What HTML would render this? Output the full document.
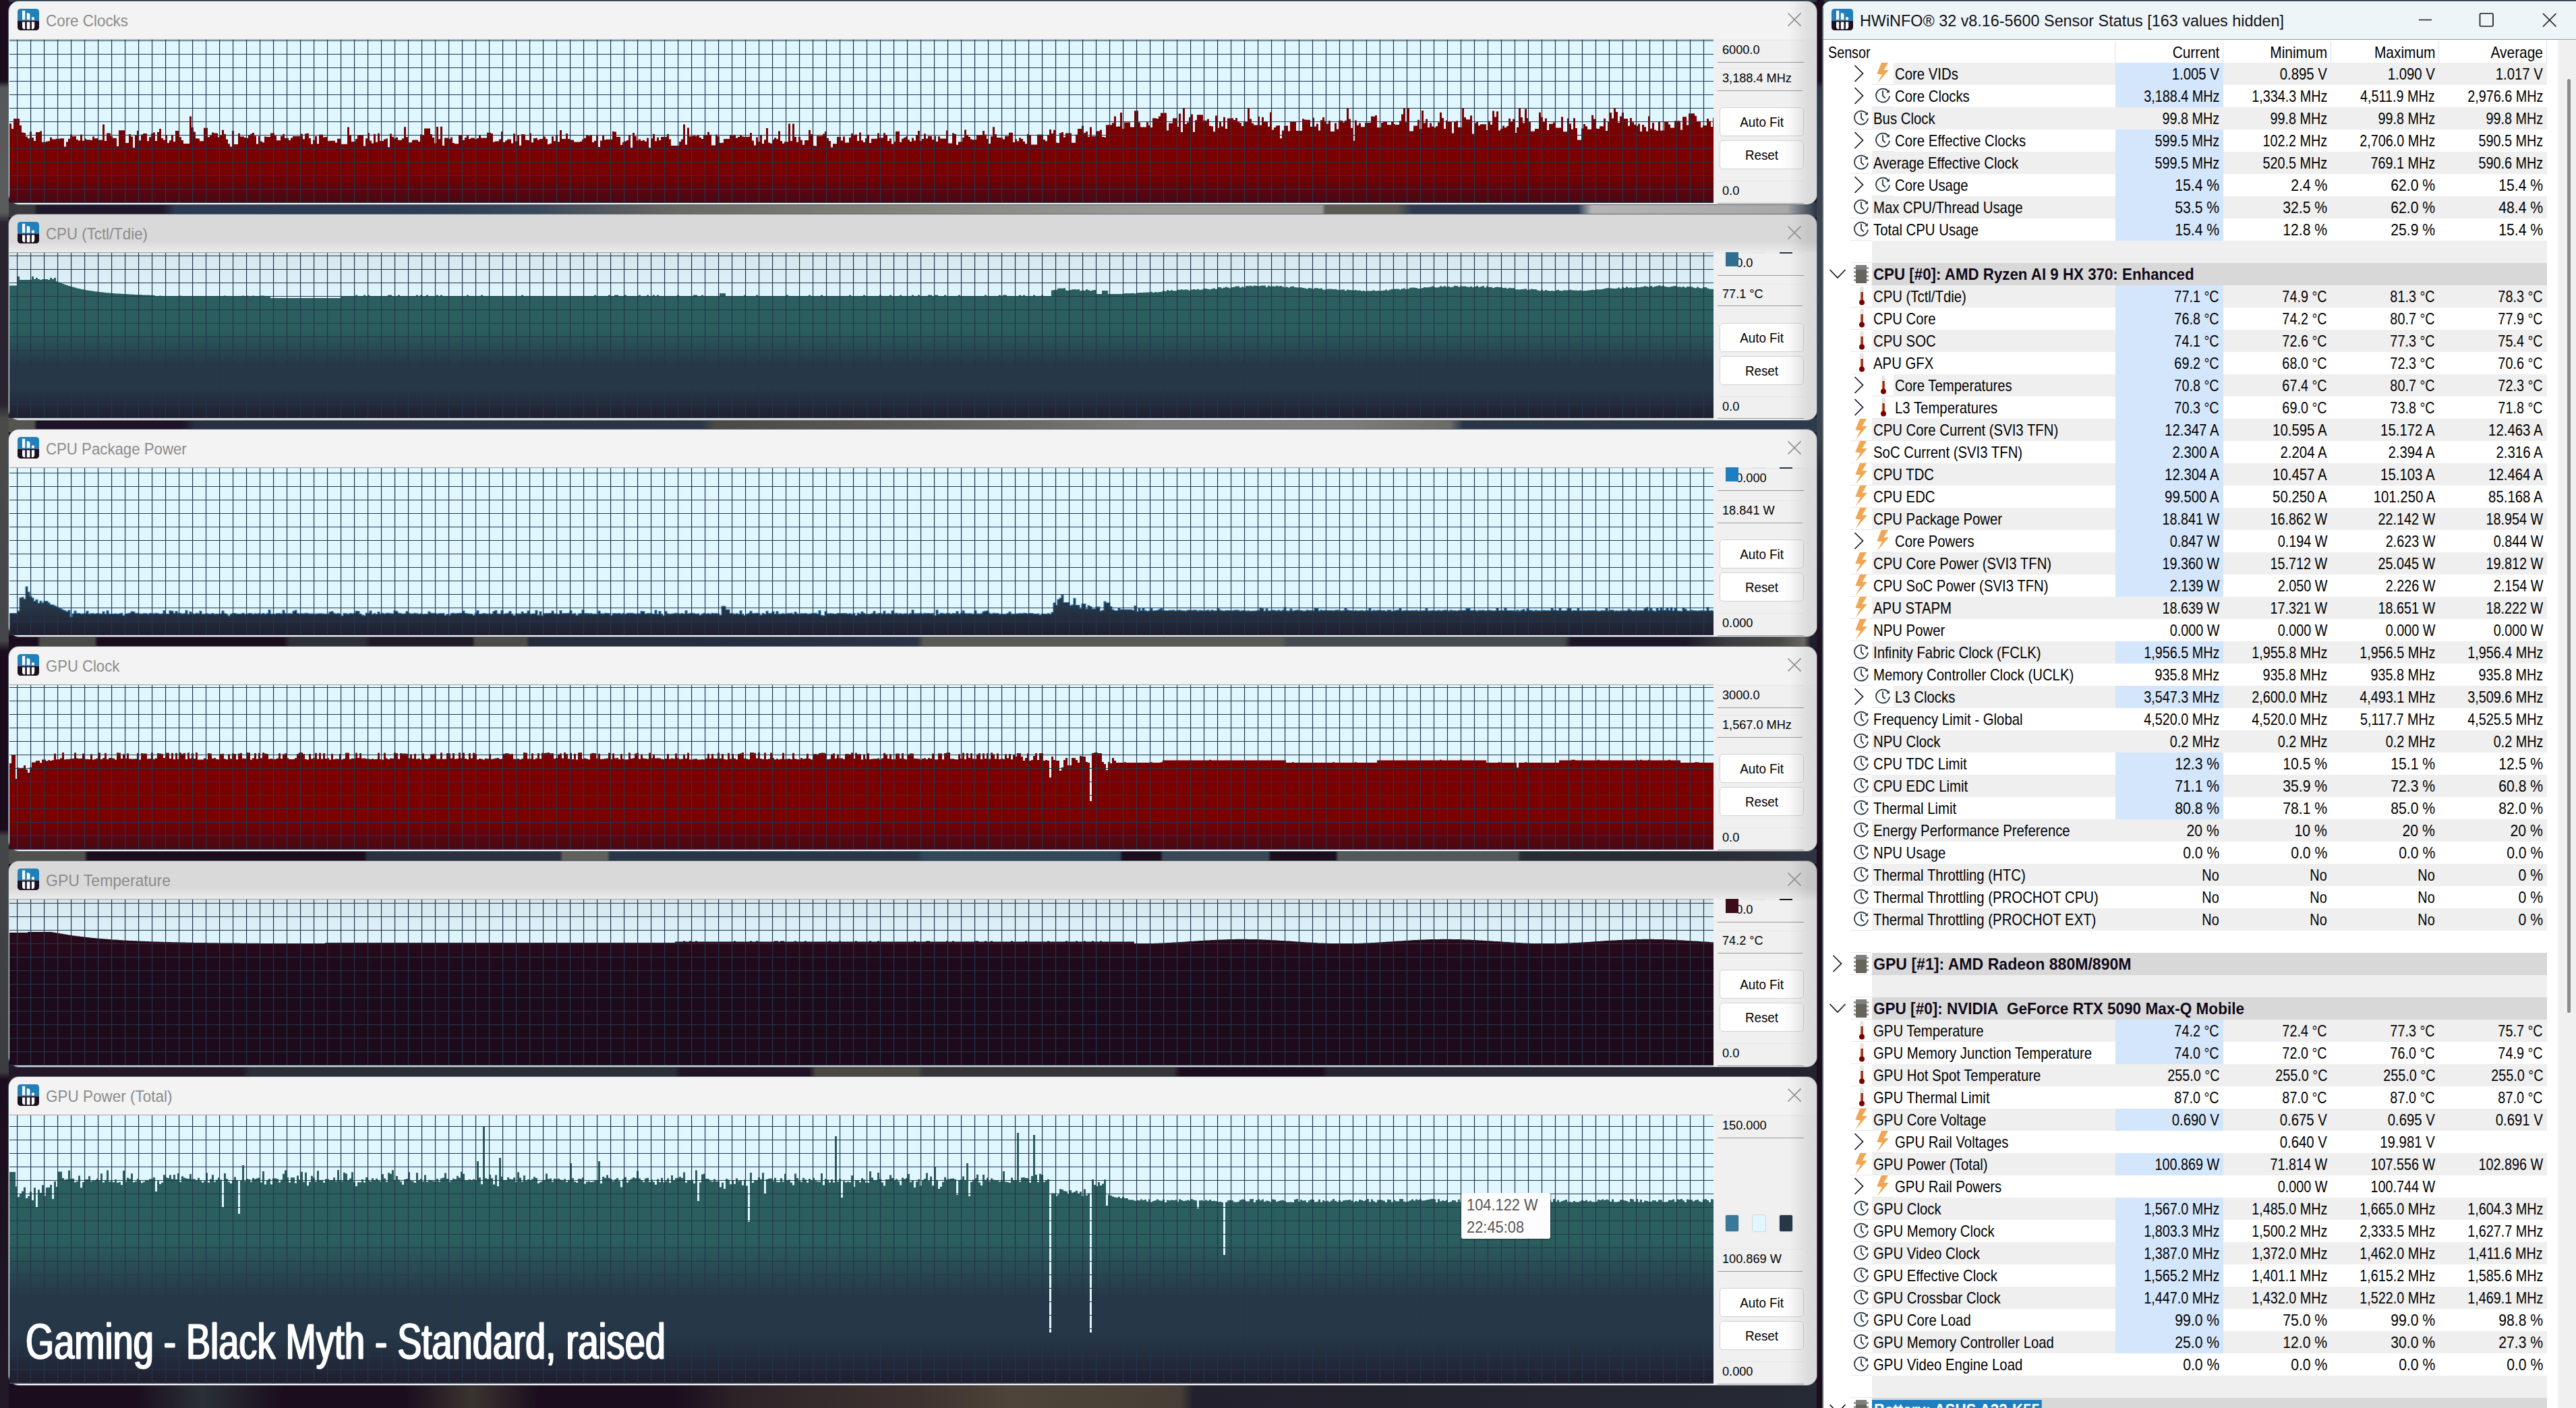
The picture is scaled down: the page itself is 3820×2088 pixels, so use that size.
<!DOCTYPE html><html><head><meta charset="utf-8"><title>HWiNFO</title><style>
*{box-sizing:border-box;margin:0;padding:0}
html,body{width:3820px;height:2088px;background:#1b0d1e}
#root{width:3820px;height:2088px;overflow:hidden;background:#1b0d1e;font-family:"Liberation Sans",sans-serif;position:relative}
.gap{position:absolute;left:0;width:2703px}
.win{position:absolute;left:13px;width:2681px;border-radius:15px;overflow:hidden;box-shadow:0 0 0 1px #5a6570}
.win .ic{position:absolute}
.wt{position:absolute;left:55px;top:0;height:56px;line-height:57px;font-size:24.5px;color:#8b8b8b;white-space:pre;transform-origin:0 0;transform:scaleX(.93)}
.cx{position:absolute;left:2637px;top:16px}
.rg{position:absolute;left:2640px;right:0;top:0;bottom:0;background:linear-gradient(90deg,rgba(0,0,0,0),rgba(0,0,0,.085) 70%,rgba(0,0,0,.09))}
.rp{position:absolute;left:2528px;right:0;background:#f0f0f0}
.tg{position:absolute;left:0;right:0;height:16px;background:linear-gradient(#d9d9d9,#ebebeb)}
.fld{position:absolute;left:2534px;width:128px;height:33.5px;background:#f0f0f0;border-bottom:1.5px solid #9a9a9a;border-top:1px solid #e6e6e6;font-size:19px;line-height:28.5px;padding-left:6.500px;color:#000;white-space:pre;overflow:hidden}
.fld span{display:inline-block;transform-origin:0 0;transform:scaleX(.955)}
.fld i{visibility:hidden;font-style:normal}
.btn{position:absolute;left:2537px;width:125px;height:43px;background:linear-gradient(90deg,#fff 70%,#f3f3f3);border:1px solid #d2d2d2;border-radius:5px;font-size:19.5px;line-height:42.5px;text-align:center;color:#000}
.btn span{display:inline-block;transform:scaleX(.965)}
.sw{position:absolute;width:21px;height:26px;border:1px solid #d8d8d8;border-radius:3px}
svg.g{position:absolute;display:block}
.sw0{position:absolute;top:2px;width:1120px;height:2090px;background:#fff;border-radius:12px 0 0 0;overflow:hidden;box-shadow:0 0 0 1px #5a6570}
.swb{position:absolute;left:0;top:0;width:1.3px;height:100%;background:#6a6658}
.stb{position:absolute;left:0;top:0;width:100%;height:57px;background:#eef5f9;border-bottom:1px solid #9a9a9a}
.sw0 .ic{position:absolute}
.stt{position:absolute;left:55px;top:0;height:56px;line-height:57px;font-size:24.5px;color:#111;white-space:pre;transform-origin:0 0}
.wc{position:absolute;left:878px;top:13px}
.hdr{position:absolute;left:0;top:57px;width:100%;height:34px;font-size:23.2px;line-height:33px}
.hdr .t,.hdr .v{top:3px}
.cs{position:absolute;top:2px;width:1px;height:32px;background:#d5e3f0}
.r{position:absolute;left:0;width:100%;height:33px;font-size:23.2px;line-height:33px;color:#000}
.bg{position:absolute;top:0;height:33px;right:46px;background:#efefef}
.bg.hd{background:#d8d8d8}
.hl{position:absolute;left:434px;top:0;width:160px;height:33px;background:#d4e6fc}
.ul{position:absolute;top:32px;width:32px;height:1px;background:#e6e6e6}
.t{position:absolute;top:.7px;white-space:pre;transform-origin:0 0;transform:scaleX(0.8771551724137931)}
.t.b{font-weight:bold;color:#100818;top:.9px}
.v{position:absolute;top:.7px;white-space:pre;transform-origin:100% 0;transform:scaleX(0.8534482758620691)}
.c1{right:532px}.c2{right:372px}.c3{right:212px}.c4{right:52px}
.chv{position:absolute;display:block}
.sb{position:absolute;left:1090px;top:57px;width:30px;height:2040px;background:#f0f0f0}
.sbt{position:absolute;left:1104.3px;top:115.300px;width:4.600px;height:1385px;background:#8c8c8c;border-radius:3px}
.tip{position:absolute;left:2167px;top:1769px;width:132px;height:68px;background:#fdfdfd;border-radius:3px;box-shadow:1px 1px 2px rgba(0,0,0,.4);font-size:23.5px;line-height:32.500px;color:#575757;padding:2px 0 0 8px;white-space:pre}
.tip span{display:block;transform-origin:0 0;transform:scaleX(.93)}
.ov{position:absolute;left:38px;top:1939.5px;font-size:73.5px;line-height:100px;color:#fff;white-space:pre;transform-origin:0 0;-webkit-text-stroke:.9px #fff;text-shadow:1.4px 0 0 #fff,-1.4px 0 0 #fff}
</style></head><body><div id="root"><svg width="0" height="0" style="position:absolute"><defs>
<g id="hwi"><clipPath id="icc"><rect width="32" height="32" rx="4.5"/></clipPath><g clip-path="url(#icc)"><rect width="32" height="17.6" fill="#217fba"/><rect y="17.600" width="32" height="14.4" fill="#1c0f1f"/></g><path d="M7 2.800h4.200v13.400H7zM13.800 6.3h1.600a3 3 0 0 1 3 3v6.900h-4.600zM23 12.300a2.200 2.200 0 1 1 0 4.400a2.200 2.200 0 1 1 0-4.400z" fill="#fff"/><path d="M7 19.600h4.200v10.600h-0.600a3.600 3.600 0 0 1-3.600-3.600zM13.800 19.600h4.600v10.600h-4.600zM20.900 19.600h4.300v7a3.600 3.600 0 0 1-3.600 3.600h-0.700z" fill="#fff"/></g>
<g id="clk" fill="none" stroke="#22343f" stroke-width="1.8"><path d="M21.500 7.200A10 10 0 1 0 23 13.500"/><path d="M13 5.200V13l3.800 3.600"/><path d="M22.900 3.900v4.700h-4.700z" fill="#22343f" stroke="none"/></g>
<g id="blt"><path d="M7 0H17L10.500 11H17.800L0.300 31.400L8 17.500L0.300 16.400z" fill="#f0a653"/></g>
<g id="thm"><rect x="4.800" y="1.300" width="4.400" height="23" rx="2.200" fill="#e4e8ea" stroke="#cfd4d6" stroke-width=".6"/><rect x="5.400" y="9" width="3.200" height="15" fill="#8b1200"/><rect x="5.400" y="9" width="1.100" height="13" fill="#d87820"/><circle cx="7" cy="24.500" r="4" fill="#7b0000"/></g>
<g id="chip"><path d="M1 5.500h22M1 11.500h22M1 17.500h22M1 23.500h22" stroke="#8a8a8a" stroke-width="2.500"/><rect x="4" y="1" width="16" height="27" fill="#67645c"/><rect x="4" y="1" width="16" height="7" fill="#808080"/></g>
</defs></svg><div class="gap" style="top:300px;height:22px;background:linear-gradient(90deg,#3a3a3c 0px,#3a3a3c 50px,#20182a 55px,#20182a 240px,#2a3a52 260px,#2c3e55 650px,#3a4a5c 800px,#6a6862 1000px,#86867f 1360px,#9a9a97 1700px,#9a9a97 1960px,#5c5c55 1966px,#5c5c55 2070px,#2c3a52 2095px,#2d3b53 2340px,#b4b4b4 2360px,#a8a8a8 2650px,#2a3444 2694px)"></div><div class="gap" style="top:619px;height:22px;background:linear-gradient(90deg,#55554f 0px,#55554f 50px,#1d1226 55px,#1d1226 270px,#283044 290px,#283044 500px,#2c3648 1040px,#4a4a44 1060px,#5c5c54 1360px,#7a7a78 1700px,#7c7c7a 2000px,#6a6a66 2150px,#2a3648 2170px,#2c3a4c 2694px)"></div><div class="gap" style="top:940px;height:22px;background:linear-gradient(90deg,#1b0d1e 0px,#1b0d1e 55px,#4a4a46 60px,#4a4a46 140px,#1b0d1e 145px,#1b0d1e 420px,#2e3038 430px,#2e3038 540px,#221a28 550px,#221a28 700px,#4c4c48 705px,#4c4c48 780px,#262c3c 785px,#262c3c 1000px,#2a3446 1360px,#5a5a54 1370px,#5a5a54 1900px,#454a4e 1910px,#454a4e 2320px,#1e1628 2330px,#1e1628 2500px,#3a3c40 2560px,#4a4a44 2640px,#6a6860 2675px,#1e2030 2685px,#1e2030 2694px)"></div><div class="gap" style="top:1259px;height:22px;background:linear-gradient(90deg,#50504c 0px,#50504c 125px,#1b0d1e 130px,#1b0d1e 540px,#2a3040 545px,#2a3040 830px,#60605c 835px,#60605c 900px,#2a3548 905px,#2a3548 1360px,#34465a 1370px,#34465a 1660px,#1b0d1e 1665px,#1b0d1e 1720px,#3a4858 1725px,#3a4858 1880px,#1b0d1e 1885px,#1b0d1e 1980px,#55585a 1985px,#55585a 2250px,#2a2c34 2255px,#2a2c34 2540px,#303440 2694px)"></div><div class="gap" style="top:1579px;height:22px;background:linear-gradient(90deg,#22182a 0px,#22182a 360px,#2c2e36 370px,#2c2e36 1000px,#1e1426 1010px,#1e1426 1200px,#4a4840 1210px,#4a4840 1360px,#353538 1370px,#353538 1740px,#1b0d1e 1750px,#1b0d1e 1960px,#26222e 1970px,#26222e 2694px)"></div><div class="gap" style="top:2050px;height:40px;background:linear-gradient(90deg,#1b0d1e 0px,#1b0d1e 200px,#2a3038 300px,#1b0d1e 420px,#1b0d1e 600px,#3a3430 700px,#1b0d1e 800px,#1b0d1e 1000px,#2e2428 1100px,#3e3230 1360px,#4e4438 1500px,#463e36 1750px,#22202c 1770px,#262a34 2694px)"></div><div class="gap" style="top:0;height:3px;width:3820px;background:#263645"></div><div class="gap" style="top:0;left:0;width:13px;height:2088px;background:linear-gradient(#1b0d1e 0,#1b0d1e 120px,#55585a 130px,#5a5c5c 315px,#2a2430 330px,#2a2430 600px,#4a4a48 620px,#45464a 950px,#1b0d1e 965px,#1b0d1e 1230px,#45464a 1240px,#3a3c40 1590px,#1b0d1e 1600px,#221a28 2088px)"></div><div class="gap" style="top:0;left:2694px;width:10px;height:2088px;background:linear-gradient(#1b0d1e 0,#1b0d1e 120px,#2c3848 130px,#3a4450 300px,#3a4450 640px,#2a2c38 700px,#1b0d1e 1000px,#1b0d1e 2088px)"></div><div class="win" style="top:2px;height:301px;background:#f3f3f3"><div class="ic" style="left:13px;top:11px"><svg width="32" height="32"><use href="#hwi"/></svg></div><div class="wt" style="transform:scaleX(0.9145)">Core Clocks</div><svg class="cx" width="22" height="22" viewBox="0 0 22 22"><path d="M1.5 1.5L20.5 20.5M20.5 1.5L1.5 20.5" stroke="#8a8a8a" stroke-width="1.6" fill="none"/></svg><div class="rp" style="top:56px;height:245px"></div><div class="fld" style="top:57px"><span>6000.0</span></div><div class="fld" style="top:99px;width:126px"><span>3,188.4 MHz</span></div><div class="btn" style="top:157px"><span>Auto Fit</span></div><div class="btn" style="top:206px"><span>Reset</span></div><div class="fld" style="top:266px"><span>0.0</span></div><div class="rg"></div></div><svg class="g" style="left:14px;top:58px" width="2527" height="242.8" viewBox="0 0 2527 242.8"><defs><linearGradient id="f1" gradientUnits="userSpaceOnUse" x1="0" y1="0" x2="0" y2="242.8"><stop offset="0" stop-color="#7b0000"/><stop offset="0.812" stop-color="#7b0000"/><stop offset="1" stop-color="#450916"/></linearGradient></defs><rect width="2527" height="242.8" fill="#e0f7ff"/><path d="M0,242.8H0V125.3H3V133H6V118H15V128H18V138.6H21V138.9H24V144.6H27V147.3H30V137.2H33V146H36V151.1H39V138.1H45V136.6H48V152.8H54V151.7H57V151.2H60V145.7H63V148.5H69V147.7H75V147.3H81V159.4H84V152.3H87V147.7H90V141.2H93V144.3H96V143.9H99V149.1H102V150.4H105V141.4H108V150.8H111V147.4H114V149.2H120V149.7H123V144.5H126V147.3H129V147H132V149.6H138V126.5H141V151H144V139.4H150V144H153V146.7H159V159H162V135.3H171V153.9H177V141H180V144.6H183V161H186V142.9H189V135.8H192V150.3H195V141.5H198V140.1H204V151.3H207V145.2H210V140.1H213V138.6H216V151H219V137.7H222V133.1H225V147.1H228V149.5H231V141.9H234V153.9H237V150.3H240V142H243V152.1H246V136H252V145.3H255V150.1H258V155H267V114.5H270V130.8H273V137.6H276V147.2H279V147.4H282V151.3H288V131.8H294V145.2H297V142.3H300V138.4H303V139.4H309V145.5H312V142.9H315V134.8H318V140.8H321V148.7H324V155.2H327V159.6H330V136.1H333V156H339V139.7H342V144.6H348V146.1H351V146.8H354V142.8H357V140.6H360V138.9H363V143.6H366V155.4H369V143.8H372V151.4H375V153.2H378V144.6H381V144.9H384V145.1H387V139.6H393V143.3H396V150.2H402V143.8H405V140.8H408V146.8H414V149.9H417V146.6H420V143.9H426V144.1H432V140.6H435V148.3H438V140.2H441V139.7H444V147.1H447V155.8H450V149.7H453V144H456V155.3H459V141.4H465V145.6H468V145H471V151.3H474V150.7H483V153.4H486V147.8H492V155.8H501V130.6H504V142.9H507V152H513V148.1H516V142.9H525V158.6H528V147.2H531V139.3H534V150.6H537V154.4H540V140.8H543V152.7H546V139.7H549V151H555V148.4H558V147.6H561V160.3H564V140.2H567V144.8H570V147.3H573V145.8H576V149.8H582V147.2H585V130.3H588V145.2H591V153.2H597V149.7H600V149.4H606V152.1H609V141.3H612V142.7H615V132.5H624V141.1H627V146H630V154.5H633V130H636V148.3H639V129.7H642V158H645V146.6H651V147.9H654V145.4H657V153.9H660V155.3H666V143.1H669V143H672V149.7H675V146.1H678V142.1H681V148.1H684V146.5H690V148.3H693V147.1H696V141.9H699V146.6H708V138.7H711V138.8H714V140.1H717V152.4H720V151.6H726V148.5H729V136.9H732V153.1H735V150.4H738V148.5H744V154.4H747V140.3H750V151.5H753V142.7H756V157.7H759V140.9H762V141.3H765V149.6H768V150H771V139.4H774V153.2H777V147H780V146.7H783V149.4H786V148H792V144.5H795V147.9H798V156H801V154.8H804V144.2H807V151.3H810V142.9H813V152.3H816V135.1H819V148H825V140.1H828V148H831V149.5H837V152.5H846V151.7H849V148.8H852V146.7H855V142.5H858V143.6H861V143.1H864V153H867V150.7H870V143.2H873V159.9H876V150.5H879V143.2H882V149.3H885V148.7H894V136.9H897V137.5H900V145.1H906V157.1H909V152.7H912V151.6H915V149.9H918V142.5H921V161H924V138.9H927V144H930V150.6H933V148.4H936V150.7H939V149.7H942V151.8H945V146.5H948V161H951V147.2H954V140.7H957V151.3H960V145.8H963V150H966V145.1H975V140.7H978V148.6H981V157.9H990V158.1H993V152H996V148.6H999V126.6H1002V156.5H1005V131.5H1008V144.3H1011V143.7H1014V143.3H1017V143.7H1020V142.7H1023V146H1026V148H1029V142.6H1035V137.8H1038V141.7H1041V157.5H1044V157.4H1047V141.6H1050V144.3H1053V154H1056V153.8H1059V147.9H1068V142.6H1071V143.2H1074V141.7H1077V146.4H1080V145H1083V142.6H1086V144.4H1089V145H1095V144.7H1098V138.9H1101V150.4H1104V157.4H1107V145.6H1110V152.1H1113V141.9H1116V155.1H1119V149.3H1122V132H1125V153.6H1128V154.8H1131V149H1134V146.2H1137V148.3H1140V136.4H1143V151.1H1146V154.7H1149V152.2H1155V125.4H1158V151.1H1161V125.4H1164V145.1H1167V152.7H1170V145H1173V149.8H1176V156.8H1179V150H1185V134.8H1188V141H1191V157.9H1194V158.4H1197V143.5H1206V140.6H1209V136.9H1212V146.7H1215V151H1218V160.5H1221V155.2H1227V145H1233V150.5H1236V144.6H1239V153.4H1245V146H1248V140.1H1251V142.5H1254V141.5H1257V151.1H1260V138.5H1263V150.2H1266V153.1H1269V147.1H1272V141.7H1275V153.9H1278V147.8H1287V139.6H1290V146.2H1296V139.2H1299V142.8H1302V151H1305V147.4H1308V155.4H1311V151.9H1314V137H1317V136.8H1320V152.7H1323V147.8H1326V145.9H1329V144.3H1332V149.3H1335V152H1338V146.6H1341V150.5H1344V142.4H1347V136.1H1350V151.1H1353V148H1356V140.2H1359V147.4H1362V143.8H1368V149.1H1371V143.7H1374V152.1H1377V144.3H1380V147.6H1389V135.4H1392V154.5H1398V139.5H1401V140.7H1404V156.8H1407V152.2H1413V146.1H1416V134.6H1419V142.9H1422V145.1H1425V148.4H1428V149.2H1431V148.9H1434V142.8H1443V136H1446V141.6H1449V147.9H1452V155H1455V144.2H1458V130.2H1461V141.1H1464V146.1H1470V146.2H1473V148.6H1476V143.7H1482V138.7H1488V153H1491V148.3H1494V151.5H1497V146.3H1500V148.1H1503V151.8H1506V155.3H1509V140.7H1512V142.5H1515V156.4H1524V141.6H1533V149H1536V151.3H1539V143H1542V134.1H1545V139.9H1548V134.7H1551V153.4H1554V153.9H1557V139.2H1560V138.1H1563V145.5H1566V139.6H1575V153.8H1581V141.6H1584V133H1590V128.5H1593V139.3H1596V137H1599V144.7H1602V130.4H1605V144.1H1611V136.6H1617V134.4H1620V145H1623V145.6H1626V127.2H1635V124.3H1638V114.6H1641V129.7H1644V129.6H1647V109.1H1650V132.9H1653V123.5H1662V130.4H1668V106.2H1674V123.6H1677V130.5H1686V123.2H1689V127.7H1692V131.1H1695V117.3H1701V117.9H1704V114.6H1707V109.4H1716V135.6H1719V124.7H1725V117.2H1731V130.1H1734V110.5H1737V138H1740V102H1743V126.1H1746V123.5H1749V115.9H1752V111.6H1755V137.7H1758V120.3H1761V112.2H1770V120.8H1776V118.4H1779V128.8H1782V129.3H1785V137.3H1788V113.4H1791V131.8H1794V122.1H1797V129.4H1800V115.7H1803V133H1806V117.5H1812V117.2H1815V120H1818V116.9H1821V122.3H1824V124.3H1827V128.9H1830V122.5H1833V122.4H1836V102H1839V118.3H1842V124.8H1845V127.5H1851V114.8H1854V127.8H1857V115.7H1860V122.4H1863V121.9H1866V129.7H1869V108.6H1872V134.4H1875V131.1H1878V128.5H1881V128.1H1884V147.2H1887V135.5H1890V128.6H1896V136.4H1899V122.4H1908V135.9H1917V118.3H1920V119.4H1923V119.8H1929V130.1H1932V116.6H1935V129.6H1938V125.5H1941V135.6H1944V120.3H1947V116.1H1950V121.6H1953V125.5H1956V121H1959V137.1H1965V124.4H1968V133.4H1971V120.8H1977V123.4H1980V120.7H1983V102H1986V118.4H1989V131.8H1992V150.8H1995V120.6H1998V127.7H2001V124.5H2004V130.3H2010V124.1H2019V114.5H2022V114.7H2025V112.9H2028V131H2034V124H2037V122.2H2043V127H2046V127.2H2049V122.1H2052V126H2055V126.9H2061V121.3H2064V111.6H2067V102H2070V123.2H2073V102H2076V136.4H2082V128.5H2088V119.8H2091V133.2H2094V106.1H2097V124.4H2100V118.4H2103V131.1H2106V124.6H2109V129.4H2112V131.2H2115V129.3H2118V123.4H2121V108.7H2124V116.9H2127V133.1H2130V120.5H2133V122.7H2136V122.6H2139V139.5H2142V123H2145V121.3H2148V130.8H2154V102H2157V116H2160V119.2H2166V113.3H2169V140.5H2172V124.6H2175V123.1H2178V128.3H2181V126.3H2190V134.9H2193V121.4H2196V126.8H2199V106.5H2202V115.6H2205V107.2H2208V135.5H2211V133.1H2214V128.6H2217V131.3H2220V128.9H2223V117.8H2226V122.5H2229V118.6H2232V139.1H2235V130.7H2238V102.9H2241V116H2244V124.6H2247V103.6H2250V117.2H2253V122.1H2256V136.7H2262V133.1H2268V108.7H2271V115.5H2274V123.1H2277V117.6H2280V135H2283V125.8H2289V123.5H2292V131.4H2298V131.6H2301V115.3H2304V137.3H2310V117.4H2313V125.5H2316V133.8H2319V117.3H2322V132H2325V149.4H2331V132.5H2334V125.9H2337V129.2H2340V133.7H2346V112.7H2349V118.4H2352V132.4H2355V133.1H2358V129.2H2364V117.7H2367V135.9H2370V122.1H2373V109.1H2376V117.6H2379V102H2382V108H2385V124H2388V114.5H2391V109.1H2394V118.1H2400V128.7H2403V116.9H2406V123.2H2409V126.7H2412V128.8H2415V125.4H2418V136.9H2421V127H2424V130.2H2427V136.7H2430V114.2H2433V132.7H2436V124H2439V134.4H2442V135.8H2445V121.9H2448V135.6H2454V122.2H2460V126.6H2463V131.6H2469V121.3H2478V134.6H2481V115.3H2487V127.5H2490V110.2H2499V113.8H2502V121.7H2508V131H2511V127.9H2517V118H2520V121.5H2523V129.9H2526V116.7H2527V242.8Z" fill="url(#f1)"/><path d="M11.56,0V242.8M31.56,0V242.8M51.56,0V242.8M71.56,0V242.8M91.56,0V242.8M111.56,0V242.8M131.56,0V242.8M151.56,0V242.8M171.56,0V242.8M191.56,0V242.8M211.56,0V242.8M231.56,0V242.8M251.56,0V242.8M271.56,0V242.8M291.56,0V242.8M311.56,0V242.8M331.56,0V242.8M351.56,0V242.8M371.56,0V242.8M391.56,0V242.8M411.56,0V242.8M431.56,0V242.8M451.56,0V242.8M471.56,0V242.8M491.56,0V242.8M511.56,0V242.8M531.56,0V242.8M551.56,0V242.8M571.56,0V242.8M591.56,0V242.8M611.56,0V242.8M631.56,0V242.8M651.56,0V242.8M671.56,0V242.8M691.56,0V242.8M711.56,0V242.8M731.56,0V242.8M751.56,0V242.8M771.56,0V242.8M791.56,0V242.8M811.56,0V242.8M831.56,0V242.8M851.56,0V242.8M871.56,0V242.8M891.56,0V242.8M911.56,0V242.8M931.56,0V242.8M951.56,0V242.8M971.56,0V242.8M991.56,0V242.8M1011.56,0V242.8M1031.56,0V242.8M1051.56,0V242.8M1071.56,0V242.8M1091.56,0V242.8M1111.56,0V242.8M1131.56,0V242.8M1151.56,0V242.8M1171.56,0V242.8M1191.56,0V242.8M1211.56,0V242.8M1231.56,0V242.8M1251.56,0V242.8M1271.56,0V242.8M1291.56,0V242.8M1311.56,0V242.8M1331.56,0V242.8M1351.56,0V242.8M1371.56,0V242.8M1391.56,0V242.8M1411.56,0V242.8M1431.56,0V242.8M1451.56,0V242.8M1471.56,0V242.8M1491.56,0V242.8M1511.56,0V242.8M1531.56,0V242.8M1551.56,0V242.8M1571.56,0V242.8M1591.56,0V242.8M1611.56,0V242.8M1631.56,0V242.8M1651.56,0V242.8M1671.56,0V242.8M1691.56,0V242.8M1711.56,0V242.8M1731.56,0V242.8M1751.56,0V242.8M1771.56,0V242.8M1791.56,0V242.8M1811.56,0V242.8M1831.56,0V242.8M1851.56,0V242.8M1871.56,0V242.8M1891.56,0V242.8M1912.50,0V242.8M1932.50,0V242.8M1952.50,0V242.8M1972.50,0V242.8M1992.50,0V242.8M2012.50,0V242.8M2032.50,0V242.8M2052.50,0V242.8M2072.50,0V242.8M2092.50,0V242.8M2112.50,0V242.8M2132.50,0V242.8M2152.50,0V242.8M2172.50,0V242.8M2192.50,0V242.8M2212.50,0V242.8M2232.50,0V242.8M2252.50,0V242.8M2272.50,0V242.8M2292.50,0V242.8M2312.50,0V242.8M2332.50,0V242.8M2352.50,0V242.8M2372.50,0V242.8M2392.50,0V242.8M2412.50,0V242.8M2432.50,0V242.8M2452.50,0V242.8M2472.50,0V242.8M2492.50,0V242.8M2512.50,0V242.8" stroke="#24364a" stroke-width="1.2" fill="none"/><path d="M0,2.5H2527M0,22.5H2527M0,42.5H2527M0,62.5H2527M0,82.5H2527M0,102.5H2527M0,122.5H2527M0,142.5H2527M0,162.5H2527M0,182.5H2527M0,202.5H2527M0,222.5H2527M0,242.5H2527" stroke="#24364a" stroke-width="1.2" fill="none"/><rect x="0" y="0" width="2527" height="1" fill="#a0a0a0"/></svg><div class="win" style="top:318px;height:304.5px;background:#d9d9d9"><div class="tg" style="top:40px"></div><div class="ic" style="left:13px;top:11px"><svg width="32" height="32"><use href="#hwi"/></svg></div><div class="wt" style="transform:scaleX(0.9093)">CPU (Tctl/Tdie)</div><svg class="cx" width="22" height="22" viewBox="0 0 22 22"><path d="M1.5 1.5L20.5 20.5M20.5 1.5L1.5 20.5" stroke="#8a8a8a" stroke-width="1.6" fill="none"/></svg><div class="rp" style="top:56px;height:248.5px"></div><div class="fld" style="top:57px"><span><i>10</i>0.0</span></div><div class="fld" style="top:102.5px;width:126px"><span>77.1 °C</span></div><div class="btn" style="top:160.5px"><span>Auto Fit</span></div><div class="btn" style="top:209.5px"><span>Reset</span></div><div class="fld" style="top:269.5px"><span>0.0</span></div><div class="sw" style="left:2538px;top:58px;height:18px;width:9px;background:#f0f0f0;border:0;border-radius:0"></div><div class="sw" style="left:2546px;top:56px;height:21px;width:19px;background:#2e6e8e;border:0;border-radius:0"></div><div class="sw" style="left:2586px;top:56px;height:1.500px;width:19px;background:#d5e8f0;border:0;border-radius:0"></div><div class="sw" style="left:2626px;top:55.5px;height:2px;width:19px;background:#263848;border:0;border-radius:0"></div><div class="rg"></div></div><svg class="g" style="left:14px;top:374px" width="2527" height="246.3" viewBox="0 0 2527 246.3"><defs><linearGradient id="f2" gradientUnits="userSpaceOnUse" x1="0" y1="0" x2="0" y2="246.3"><stop offset="0" stop-color="#2b5f5f"/><stop offset="0.466" stop-color="#2b5f5f"/><stop offset="0.675" stop-color="#263848"/><stop offset="0.822" stop-color="#263848"/><stop offset="1" stop-color="#1f1e2f"/></linearGradient><linearGradient id="b2" x1="0" y1="0" x2="0" y2="1"><stop offset="0" stop-color="#d6e6ec"/><stop offset="0.3" stop-color="#e0f7ff"/></linearGradient></defs><rect width="2527" height="246.3" fill="url(#b2)"/><path d="M0,246.3H0V49.5H12V36H15V41H33V36H36V40H39V38H42V40H45V41H48V40H57V41H60V38H63V40H66V38H69V43.2H72V44.5H75V45.8H78V47H81V48.1H84V49.1H87V50.1H90V51H93V51.8H96V52.6H99V53.4H102V54H105V54.7H108V55.3H111V55.9H114V56.4H117V56.9H120V57.3H123V57.8H126V58.2H129V58.6H132V58.9H135V59.3H138V59.6H141V59.9H144V60.2H147V60.5H150V60.7H153V61H156V61.2H159V61.4H162V61.6H165V61.8H168V62H171V62.1H174V62.3H177V62.5H180V62.6H183V62.8H186V62.9H189V63H192V63.1H195V63.3H198V63.4H201V63.5H204V63.6H207V63.7H210V63.8H213V63.9H216V66H222V64.5H225V66H252V64.5H255V66H318V64.5H321V66H345V64.5H348V66H351V64.5H354V66H360V64.5H363V66H372V64.5H378V66H387V68H492V65H513V63.5H516V65H525V63.5H528V65H531V63.5H534V65H561V63.5H567V65H576V63.5H579V65H603V63.5H606V65H609V63.5H612V65H618V63.5H621V65H633V63.5H636V65H639V63.5H642V65H678V63.5H681V65H699V63.5H702V65H759V63.5H762V65H867V63.5H870V65H888V63.5H891V65H897V63.5H903V65H912V63.5H915V65H933V63.5H936V65H945V63.5H948V65H954V63.5H957V65H960V63.5H963V65H990V63.5H993V65H1014V63.5H1020V65H1026V63.5H1029V65H1053V61H1062V65H1089V63.5H1092V65H1107V63.5H1110V65H1152V63.5H1155V65H1185V63.5H1188V65H1203V63.5H1206V65H1245V63.5H1248V65H1266V63.5H1269V65H1290V63.5H1293V65H1305V63.5H1308V65H1320V63.5H1323V65H1338V63.5H1341V65H1347V63.5H1350V65H1362V63.5H1368V65H1371V63.5H1377V65H1386V63.5H1389V65H1407V63.5H1410V65H1446V63.5H1449V65H1467V63.5H1470V65H1473V63.5H1479V65H1497V63.5H1500V65H1503V63.5H1506V65H1518V63.5H1521V65H1530V63.5H1533V65H1545V56.5H1548V55.9H1551V56H1554V53.7H1557V53.6H1560V53.7H1563V53.2H1566V56.4H1569V56.9H1572V56H1575V55.2H1578V55.1H1581V55.5H1584V55.1H1587V57.2H1590V56.2H1593V56.9H1596V55H1599V56.2H1602V57.2H1605V56.5H1608V56.1H1611V62H1620V57H1629V62H1650V61.8H1653V61.1H1656V61H1659V60.9H1662V61H1665V60.8H1668V61.4H1671V60.2H1674V60.1H1677V60H1680V59.7H1686V59.4H1689V59.6H1692V58.8H1695V59.9H1698V58.9H1701V59.5H1704V59H1707V58.8H1710V56.9H1713V58.1H1716V56H1719V57.3H1722V56.3H1725V57.2H1728V57.3H1731V55.8H1737V55.3H1740V55.7H1743V55.2H1746V55.8H1749V57.1H1752V55.4H1755V55.1H1758V55.4H1761V54.7H1764V55.7H1767V55.4H1770V53.9H1776V54.7H1779V55.2H1782V54.3H1785V53.5H1788V54.7H1791V52.1H1794V52H1797V53.6H1800V52.5H1803V51.4H1806V52.4H1809V53.4H1812V52H1815V51.4H1818V50.6H1821V50.4H1824V52.4H1827V51.2H1830V52.2H1833V49.9H1836V50.3H1839V49.7H1842V50.5H1845V49.6H1848V50H1851V50.4H1854V50.1H1857V49.4H1863V51.7H1866V49.8H1869V50.7H1872V50.4H1875V50.8H1878V49.8H1881V50.5H1884V50H1887V51.2H1890V52.3H1893V51.6H1896V52.4H1899V51H1902V50.6H1905V52.1H1908V52.2H1911V52.6H1914V52.3H1917V53.1H1920V53.5H1923V54.2H1926V52.9H1929V53.4H1932V54.6H1935V53.3H1938V53.2H1941V53.9H1944V53.5H1947V55.5H1950V55.8H1953V54.7H1956V54.4H1959V54.5H1962V55H1965V54.8H1968V55.8H1971V56.3H1974V55.6H1977V55.3H1980V57H1983V55.5H1986V55.9H1989V56.2H1992V56.5H1995V55.9H1998V56.7H2001V56.5H2004V57.6H2007V57.1H2010V57.9H2013V57.3H2016V57.5H2019V57H2022V56.6H2025V57.5H2028V57H2031V57.6H2034V56.9H2037V56.8H2040V55.5H2043V56.8H2046V55.5H2049V54.7H2052V54.4H2055V54.5H2058V54.6H2061V55.4H2064V54.2H2067V53.5H2070V55H2073V54.3H2076V52.8H2079V52.6H2085V53H2088V54.1H2094V53H2097V51.9H2100V52.2H2103V51.9H2106V51.6H2109V50.6H2112V51.9H2115V52.4H2118V52H2121V50.3H2124V51.2H2127V50.2H2130V51.4H2133V50.7H2136V51.9H2139V51.4H2142V49.7H2145V50.1H2148V51.6H2151V50.5H2154V50.4H2160V51.3H2163V51.7H2166V50.8H2169V51.9H2172V51H2175V49.9H2178V51.8H2181V50.9H2184V50.1H2187V52.5H2190V50.3H2193V51.8H2199V52.9H2202V51.9H2205V51.6H2208V51.9H2214V53H2217V52.7H2220V53.9H2223V52.8H2226V53.3H2232V55.3H2235V55.2H2238V55.4H2241V55H2244V54.7H2247V54.2H2250V56.1H2253V55.4H2256V54.5H2259V55H2262V54.9H2265V56.6H2268V57.2H2271V55.6H2274V57.2H2277V56.1H2280V57.1H2283V57.6H2286V57.1H2289V57.6H2292V56.6H2295V55.7H2298V57H2301V57.2H2304V56.2H2307V56.6H2310V56.4H2313V55.7H2316V56.3H2319V56.4H2322V56.6H2325V57H2328V56.2H2331V57.5H2334V57H2337V57.1H2340V56.4H2343V56.2H2346V55.7H2349V56.1H2352V54.9H2355V55.3H2361V54.7H2364V53.9H2367V53.2H2370V53H2373V53.5H2376V53.8H2379V54.1H2382V53.8H2385V52.5H2388V53.9H2391V52.1H2394V53H2397V51.2H2400V52.7H2403V52.3H2406V52.9H2409V52.6H2412V51.9H2415V52.2H2418V51.8H2421V51.3H2424V50.2H2427V50.9H2430V51.8H2433V50.1H2436V51.8H2439V50.7H2442V50.3H2445V49.3H2448V50.3H2451V49.8H2454V51H2457V51.6H2460V51.7H2463V51H2466V50.5H2469V49.9H2472V51.4H2475V51.2H2478V51.7H2481V51H2484V52.4H2487V50.9H2490V51.3H2496V52.4H2499V53.3H2502V51.6H2505V53H2508V53.5H2511V52.3H2514V52.1H2517V53.6H2520V54.5H2523V54.8H2526V54.6H2527V246.3Z" fill="url(#f2)"/><path d="M11.56,0V246.3M31.56,0V246.3M51.56,0V246.3M71.56,0V246.3M91.56,0V246.3M111.56,0V246.3M131.56,0V246.3M151.56,0V246.3M171.56,0V246.3M191.56,0V246.3M211.56,0V246.3M231.56,0V246.3M251.56,0V246.3M271.56,0V246.3M291.56,0V246.3M311.56,0V246.3M331.56,0V246.3M351.56,0V246.3M371.56,0V246.3M391.56,0V246.3M411.56,0V246.3M431.56,0V246.3M451.56,0V246.3M471.56,0V246.3M491.56,0V246.3M511.56,0V246.3M531.56,0V246.3M551.56,0V246.3M571.56,0V246.3M591.56,0V246.3M611.56,0V246.3M631.56,0V246.3M651.56,0V246.3M671.56,0V246.3M691.56,0V246.3M711.56,0V246.3M731.56,0V246.3M751.56,0V246.3M771.56,0V246.3M791.56,0V246.3M811.56,0V246.3M831.56,0V246.3M851.56,0V246.3M871.56,0V246.3M891.56,0V246.3M911.56,0V246.3M931.56,0V246.3M951.56,0V246.3M971.56,0V246.3M991.56,0V246.3M1011.56,0V246.3M1031.56,0V246.3M1051.56,0V246.3M1071.56,0V246.3M1091.56,0V246.3M1111.56,0V246.3M1131.56,0V246.3M1151.56,0V246.3M1171.56,0V246.3M1191.56,0V246.3M1211.56,0V246.3M1231.56,0V246.3M1251.56,0V246.3M1271.56,0V246.3M1291.56,0V246.3M1311.56,0V246.3M1331.56,0V246.3M1351.56,0V246.3M1371.56,0V246.3M1391.56,0V246.3M1411.56,0V246.3M1431.56,0V246.3M1451.56,0V246.3M1471.56,0V246.3M1491.56,0V246.3M1511.56,0V246.3M1531.56,0V246.3M1551.56,0V246.3M1571.56,0V246.3M1591.56,0V246.3M1611.56,0V246.3M1631.56,0V246.3M1651.56,0V246.3M1671.56,0V246.3M1691.56,0V246.3M1711.56,0V246.3M1731.56,0V246.3M1751.56,0V246.3M1771.56,0V246.3M1791.56,0V246.3M1811.56,0V246.3M1831.56,0V246.3M1851.56,0V246.3M1871.56,0V246.3M1891.56,0V246.3M1912.50,0V246.3M1932.50,0V246.3M1952.50,0V246.3M1972.50,0V246.3M1992.50,0V246.3M2012.50,0V246.3M2032.50,0V246.3M2052.50,0V246.3M2072.50,0V246.3M2092.50,0V246.3M2112.50,0V246.3M2132.50,0V246.3M2152.50,0V246.3M2172.50,0V246.3M2192.50,0V246.3M2212.50,0V246.3M2232.50,0V246.3M2252.50,0V246.3M2272.50,0V246.3M2292.50,0V246.3M2312.50,0V246.3M2332.50,0V246.3M2352.50,0V246.3M2372.50,0V246.3M2392.50,0V246.3M2412.50,0V246.3M2432.50,0V246.3M2452.50,0V246.3M2472.50,0V246.3M2492.50,0V246.3M2512.50,0V246.3" stroke="#24364a" stroke-width="1.2" fill="none"/><path d="M0,5.5H2527M0,25.5H2527M0,45.5H2527M0,65.5H2527M0,85.5H2527M0,105.5H2527M0,125.5H2527M0,145.5H2527M0,165.5H2527M0,185.5H2527M0,205.5H2527M0,225.5H2527M0,245.5H2527" stroke="#24364a" stroke-width="1.2" fill="none"/><rect x="0" y="0" width="2527" height="1" fill="#a0a0a0"/></svg><div class="win" style="top:637px;height:307px;background:#f3f3f3"><div class="ic" style="left:13px;top:11px"><svg width="32" height="32"><use href="#hwi"/></svg></div><div class="wt" style="transform:scaleX(0.9071)">CPU Package Power</div><svg class="cx" width="22" height="22" viewBox="0 0 22 22"><path d="M1.5 1.5L20.5 20.5M20.5 1.5L1.5 20.5" stroke="#8a8a8a" stroke-width="1.6" fill="none"/></svg><div class="rp" style="top:56px;height:251px"></div><div class="fld" style="top:57px"><span><i>10</i>0.000</span></div><div class="fld" style="top:105px;width:126px"><span>18.841 W</span></div><div class="btn" style="top:163px"><span>Auto Fit</span></div><div class="btn" style="top:212px"><span>Reset</span></div><div class="fld" style="top:272px"><span>0.000</span></div><div class="sw" style="left:2538px;top:58px;height:18px;width:9px;background:#f0f0f0;border:0;border-radius:0"></div><div class="sw" style="left:2546px;top:56px;height:21px;width:19px;background:#1e7fc0;border:0;border-radius:0"></div><div class="sw" style="left:2586px;top:56px;height:1.500px;width:19px;background:#d5e8f0;border:0;border-radius:0"></div><div class="sw" style="left:2626px;top:55.5px;height:2px;width:19px;background:#263848;border:0;border-radius:0"></div><div class="rg"></div></div><svg class="g" style="left:14px;top:693px" width="2527" height="248.8" viewBox="0 0 2527 248.8"><defs><linearGradient id="f3" gradientUnits="userSpaceOnUse" x1="0" y1="0" x2="0" y2="248.8"><stop offset="0" stop-color="#263848"/><stop offset="0.822" stop-color="#263848"/><stop offset="1" stop-color="#1f1e2f"/></linearGradient></defs><rect width="2527" height="248.8" fill="#e0f7ff"/><path d="M0,248.8H0V216.5H12V213H15V193.6H18V192.8H21V195.3H24V177H27V185H30V191.4H33V193.7H36V198.2H39V196.3H42V201.6H45V198.3H48V201H51V198.5H54V198.6H57V201H60V203.8H63V204H66V205.4H69V206.8H72V208.3H75V209.7H78V211.2H81V212.6H84V214H87V212H90V222H93V217.1H96V213H99V216.7H102V216.5H105V217.4H108V217.1H111V216.8H114V213.4H117V217.3H120V216.7H123V216.9H126V217.4H129V216.6H132V217H135V217.3H138V214.1H141V217.4H144V212.8H147V217.4H150V217.5H153V217.3H156V217.1H159V217.5H162V217H165V216.4H168V219.7H171V217.5H174V216.8H177V216.3H180V213.9H183V214.3H186V216.8H189V216.4H192V217.1H195V217.4H198V216.7H201V216.8H204V217.6H207V216.5H210V216.6H213V217.1H216V216.3H219V216.8H222V217.6H225V217H228V212.5H231V217.4H237V212.8H240V213.4H243V216.5H246V213.5H249V216.4H252V216.3H255V217.2H258V216.7H261V212.2H264V217.7H267V214.2H270V216.8H273V217.5H276V216.3H279V217H282V213.2H285V217.7H288V217.3H291V216.8H294V217.4H300V216.6H303V217.7H306V217.4H309V217.3H312V217H315V213.1H318V216.7H321V217.6H324V220.1H327V217.6H330V216.6H336V217.2H339V217.5H342V217.2H345V216.4H348V217.6H351V217.4H354V216.5H357V216.8H360V217.7H363V216.9H366V217.3H369V216.5H372V217.6H375V216.5H378V217.7H381V216.8H384V211.6H387V217.2H390V217.6H393V217.5H396V216.6H399V216.7H402V217.1H405V212.1H408V216.8H411V217.1H414V216.9H417V217H420V213.4H423V212.1H426V216.5H429V217.3H432V216.8H435V217.1H438V216.4H441V216.6H444V217.4H447V217.1H450V217.6H453V217.2H456V217H459V216.9H462V217H465V217.3H468V217.6H471V217.1H474V214.7H477V213.8H480V216.4H483V217.4H486V216.5H489V217.2H492V220H495V216.6H498V216.9H501V217.7H504V216.5H507V217H510V216.6H513V213.4H516V213.6H519V217.2H522V218.9H525V219.9H528V216.4H534V213.1H537V217.6H540V216.7H543V217.6H546V214.6H549V217.3H552V216.4H555V217.2H558V216.4H564V216.9H567V217.1H570V212.9H573V213.7H576V216.4H579V216.7H582V217.4H585V217H588V213.7H591V216.3H594V217.1H597V217H600V216.4H603V216.9H606V217.5H609V217H612V217.7H615V217.5H618V217.2H621V214H624V216.4H627V216.7H630V216.4H633V217.5H636V216.7H642V216.5H645V219.2H648V217.7H651V219.1H654V216.7H657V216.3H660V217H663V216.6H666V216.3H669V216.4H672V213.1H675V216.6H678V217H681V217.2H684V217.5H687V219.3H690V216.5H693V212.6H696V217.5H699V217.3H702V216.5H705V217H708V217.4H711V217.1H714V217.3H717V213.8H720V212.2H723V217.1H726V217.2H729V212.5H732V217.3H735V217H738V216.4H741V213.5H744V217.3H747V219.8H750V217H756V217.4H759V214.3H762V216.7H768V213.1H771V217.2H777V217H780V212.2H783V219.1H786V214H789V219.9H792V216.9H795V216.6H801V216.5H804V213.1H807V217H810V217.3H813V217.6H816V212.6H819V216.9H822V216.5H825V216.7H828V216.3H831V212.7H834V217.3H837V216.7H840V219.4H843V217.1H846V216.9H849V211.8H852V216.7H855V216.6H858V217H861V216.8H864V217.5H867V217.2H870V217.6H873V213H876V216.9H879V217.2H882V216.4H885V216.5H888V216.8H891V219.8H894V216.7H900V216.9H903V216.5H906V217.6H909V216.6H912V217.7H915V216.5H918V216.4H924V216.7H927V217.5H930V216.9H933V217H936V213.6H939V213.9H942V217.2H945V216.6H951V216.9H954V217.5H957V212.1H960V217.6H963V213.6H966V217.6H969V220H972V213.8H975V217H978V217.6H981V217.2H984V216.9H987V216.4H990V216.6H993V217.2H996V216.5H999V217.2H1002V212.6H1005V217.1H1008V216.6H1011V216.3H1014V216.9H1017V217.2H1020V217H1023V219.1H1026V217.3H1029V216.3H1032V217.2H1035V216.7H1038V217.6H1041V216.3H1044V216.9H1047V216.6H1050V217.3H1053V219.1H1056V206H1062V211H1068V216.6H1071V216.9H1074V217.6H1077V216.9H1080V217.7H1083V212.9H1086V217.6H1089V219.8H1092V217.6H1095V216.6H1098V213.2H1101V216.8H1107V216.3H1110V216.8H1113V219H1116V216.6H1119V217.5H1122V213.2H1125V216.8H1128V216.6H1131V214H1134V217.4H1137V213.7H1140V217.6H1143V217.3H1146V216.8H1149V217.6H1152V216.7H1158V216.3H1161V217.6H1164V214.5H1167V217H1170V217.6H1173V216.7H1176V217H1179V216.6H1182V217.3H1185V217.4H1188V216.8H1194V216.4H1197V217.4H1200V212.5H1203V219.3H1206V220H1209V213.9H1212V217H1215V216.9H1221V217.2H1224V217.5H1227V216.5H1230V216.7H1233V216.8H1236V216.6H1242V217.5H1245V216.8H1248V217.7H1251V216.6H1254V219.7H1257V216.4H1260V217.4H1263V214.3H1266V216.5H1269V217.7H1272V217.6H1275V217.5H1278V216.7H1281V213.6H1284V217.2H1287V216.8H1290V216.6H1293V217.1H1296V213.3H1299V217.2H1302V216.7H1305V217.4H1308V212.9H1311V217.1H1314V216.4H1317V217.3H1320V216.7H1323V217.6H1326V217.1H1329V216.9H1332V217.7H1335V216.6H1338V211.8H1341V216.9H1350V216.3H1353V217.2H1356V216.4H1359V216.8H1362V216.5H1365V217H1368V216.5H1371V219.9H1374V211.7H1377V217.7H1380V216.4H1383V216.8H1386V217.2H1389V216.5H1392V216.6H1395V217.5H1398V216.6H1401V216.9H1404V213.7H1407V217.3H1410V216.4H1413V212.8H1416V216.5H1419V217.1H1422V216.7H1425V217.1H1428V217.2H1431V212.9H1434V217H1437V217.4H1440V216.9H1443V214.1H1446V213.3H1449V212.9H1452V216.4H1455V217.4H1458V216.4H1461V216.8H1464V216.5H1467V217.7H1470V217.4H1473V217.7H1476V217.6H1479V216.5H1482V214.2H1485V217.4H1488V217.6H1491V217.4H1494V217H1497V216.6H1500V217H1503V216.4H1506V216.5H1509V217.3H1512V216.5H1518V217.2H1521V217.5H1524V217.1H1527V218.9H1530V217.2H1533V217.4H1536V217.7H1539V216.8H1542V217.6H1545V215H1548V201H1551V204.5H1554V196H1557V194H1560V189H1563V200.5H1572V205H1575V204H1578V194.4H1581V204.5H1587V209.5H1590V202.5H1596V210H1599V205H1602V206.5H1605V210H1611V207H1617V213H1620V212H1623V199H1626V201H1632V206.5H1635V211H1638V212.5H1644V209H1647V211H1665V212H1668V205.5H1671V214H1674V209.5H1677V212.4H1680V208.8H1683V212.2H1686V213.2H1689V212.7H1692V209.4H1695V212.7H1698V212.5H1701V212H1704V210.7H1707V209.4H1710V212.1H1713V212.6H1716V212.7H1719V212H1722V212.1H1725V211.9H1728V213H1731V212.4H1734V211.8H1737V212.6H1740V212.7H1743V213.1H1746V212.1H1749V211.9H1752V212.4H1755V211.9H1758V211.8H1761V213.1H1764V212.1H1767V212.5H1770V212.9H1773V212.2H1776V211.9H1779V212.9H1782V211.8H1785V212.8H1791V209.5H1794V211.9H1797V212.8H1800V213H1803V212.2H1806V212.4H1809V212.5H1812V212.7H1815V212.1H1818V211.8H1821V212.1H1824V213.1H1827V212.3H1833V213.1H1836V212.8H1839V213.2H1842V213H1848V212.8H1851V212.2H1854V208.4H1857V209.7H1860V213.1H1863V209.9H1866V212.8H1872V211.9H1875V212.3H1878V212.9H1881V211.9H1884V213.1H1887V211.9H1890V207.8H1893V212.9H1896V213H1899V210H1902V212.9H1905V212.2H1908V211.8H1911V212.2H1914V212.3H1917V213.1H1920V213H1923V211.8H1926V212.4H1929V212.3H1932V212.6H1935V209H1938V209.5H1941V212.9H1944V211.8H1947V212.5H1950V212.1H1953V212.3H1956V212.2H1962V212.8H1965V212H1968V211.9H1971V212.8H1974V212.7H1977V212.4H1980V208.8H1983V211.8H1986V212.2H1989V212.5H1992V213H1995V212.4H1998V212.9H2001V212.7H2004V212.3H2007V213H2010V212.8H2013V212.4H2016V209.5H2019V213H2022V212.1H2025V212.8H2028V212H2031V212.1H2034V212.5H2037V212.3H2040V213.2H2043V211.9H2049V213.2H2052V212.8H2055V212.1H2058V211.9H2061V209.3H2064V212.9H2067V212.5H2070V212.4H2073V212.6H2076V212.8H2079V212.4H2082V212.8H2085V212.1H2088V213H2091V212.8H2097V212.4H2100V209.6H2103V212.9H2106V212.7H2109V212.4H2112V212.7H2118V212.1H2121V212.9H2124V212.5H2127V211.9H2130V212H2133V213.1H2136V211.9H2139V212.6H2142V212.5H2145V213H2148V212.4H2151V212.1H2154V212.3H2157V212H2160V209.6H2163V209.3H2166V212.4H2169V212.3H2172V212.1H2175V213.1H2178V212.1H2181V212.3H2184V212H2187V212.9H2190V212.5H2193V212.1H2196V212.3H2199V212.9H2202V212.5H2205V208.5H2208V212.3H2211V212.2H2217V208.3H2220V212.2H2226V212.4H2229V212.7H2232V213.1H2235V211.9H2238V213.1H2241V212H2244V210.7H2247V213.1H2250V209.8H2253V212.1H2256V212.3H2259V213.1H2262V212H2265V212.7H2271V212.9H2274V212.1H2277V212.5H2280V212.4H2283V212.6H2286V208.9H2289V211.9H2292V212H2295V212.5H2298V208.9H2301V212.5H2304V212.7H2307V212.3H2310V209.6H2313V209.2H2316V212.8H2319V212.3H2322V212.5H2325V209.3H2328V212.7H2331V213H2334V212.5H2337V212.9H2340V212.4H2343V212.6H2346V212.2H2349V212.4H2352V212.2H2355V213.2H2358V212.9H2361V212.2H2364V212.6H2367V209.1H2370V213H2373V211.9H2376V211.8H2379V213.1H2382V212.7H2385V213.1H2388V212.7H2391V212.8H2397V212.7H2400V210.4H2403V211.9H2406V213.1H2409V212.3H2412V212.9H2415V212.2H2418V212.4H2424V209.7H2427V207.8H2430V212.6H2433V209.5H2436V212.6H2439V213.2H2442V208.8H2445V212.1H2448V208.1H2451V212H2454V211.9H2457V208.2H2460V212.1H2463V208.1H2466V212.8H2469V209.3H2472V212.8H2475V213.1H2478V213.2H2481V208.2H2484V210.2H2487V212.8H2490V213H2493V211.9H2496V212.6H2499V212.7H2502V212.9H2505V212.7H2508V212.4H2511V212.9H2517V207.8H2520V212.8H2523V212.3H2526V213.2H2527V248.8Z" fill="url(#f3)"/><path d="M0,248.8H0V216.5H12V213H15V193.6H18V192.8H21V195.3H24V177H27V185H30V191.4H33V193.7H36V198.2H39V196.3H42V201.6H45V198.3H48V201H51V198.5H54V198.6H57V201H60V203.8H63V204H66V205.4H69V206.8H72V208.3H75V209.7H78V211.2H81V212.6H84V214H87V212H90V222H93V217.1H96V213H99V216.7H102V216.5H105V217.4H108V217.1H111V216.8H114V213.4H117V217.3H120V216.7H123V216.9H126V217.4H129V216.6H132V217H135V217.3H138V214.1H141V217.4H144V212.8H147V217.4H150V217.5H153V217.3H156V217.1H159V217.5H162V217H165V216.4H168V219.7H171V217.5H174V216.8H177V216.3H180V213.9H183V214.3H186V216.8H189V216.4H192V217.1H195V217.4H198V216.7H201V216.8H204V217.6H207V216.5H210V216.6H213V217.1H216V216.3H219V216.8H222V217.6H225V217H228V212.5H231V217.4H237V212.8H240V213.4H243V216.5H246V213.5H249V216.4H252V216.3H255V217.2H258V216.7H261V212.2H264V217.7H267V214.2H270V216.8H273V217.5H276V216.3H279V217H282V213.2H285V217.7H288V217.3H291V216.8H294V217.4H300V216.6H303V217.7H306V217.4H309V217.3H312V217H315V213.1H318V216.7H321V217.6H324V220.1H327V217.6H330V216.6H336V217.2H339V217.5H342V217.2H345V216.4H348V217.6H351V217.4H354V216.5H357V216.8H360V217.7H363V216.9H366V217.3H369V216.5H372V217.6H375V216.5H378V217.7H381V216.8H384V211.6H387V217.2H390V217.6H393V217.5H396V216.6H399V216.7H402V217.1H405V212.1H408V216.8H411V217.1H414V216.9H417V217H420V213.4H423V212.1H426V216.5H429V217.3H432V216.8H435V217.1H438V216.4H441V216.6H444V217.4H447V217.1H450V217.6H453V217.2H456V217H459V216.9H462V217H465V217.3H468V217.6H471V217.1H474V214.7H477V213.8H480V216.4H483V217.4H486V216.5H489V217.2H492V220H495V216.6H498V216.9H501V217.7H504V216.5H507V217H510V216.6H513V213.4H516V213.6H519V217.2H522V218.9H525V219.9H528V216.4H534V213.1H537V217.6H540V216.7H543V217.6H546V214.6H549V217.3H552V216.4H555V217.2H558V216.4H564V216.9H567V217.1H570V212.9H573V213.7H576V216.4H579V216.7H582V217.4H585V217H588V213.7H591V216.3H594V217.1H597V217H600V216.4H603V216.9H606V217.5H609V217H612V217.7H615V217.5H618V217.2H621V214H624V216.4H627V216.7H630V216.4H633V217.5H636V216.7H642V216.5H645V219.2H648V217.7H651V219.1H654V216.7H657V216.3H660V217H663V216.6H666V216.3H669V216.4H672V213.1H675V216.6H678V217H681V217.2H684V217.5H687V219.3H690V216.5H693V212.6H696V217.5H699V217.3H702V216.5H705V217H708V217.4H711V217.1H714V217.3H717V213.8H720V212.2H723V217.1H726V217.2H729V212.5H732V217.3H735V217H738V216.4H741V213.5H744V217.3H747V219.8H750V217H756V217.4H759V214.3H762V216.7H768V213.1H771V217.2H777V217H780V212.2H783V219.1H786V214H789V219.9H792V216.9H795V216.6H801V216.5H804V213.1H807V217H810V217.3H813V217.6H816V212.6H819V216.9H822V216.5H825V216.7H828V216.3H831V212.7H834V217.3H837V216.7H840V219.4H843V217.1H846V216.9H849V211.8H852V216.7H855V216.6H858V217H861V216.8H864V217.5H867V217.2H870V217.6H873V213H876V216.9H879V217.2H882V216.4H885V216.5H888V216.8H891V219.8H894V216.7H900V216.9H903V216.5H906V217.6H909V216.6H912V217.7H915V216.5H918V216.4H924V216.7H927V217.5H930V216.9H933V217H936V213.6H939V213.9H942V217.2H945V216.6H951V216.9H954V217.5H957V212.1H960V217.6H963V213.6H966V217.6H969V220H972V213.8H975V217H978V217.6H981V217.2H984V216.9H987V216.4H990V216.6H993V217.2H996V216.5H999V217.2H1002V212.6H1005V217.1H1008V216.6H1011V216.3H1014V216.9H1017V217.2H1020V217H1023V219.1H1026V217.3H1029V216.3H1032V217.2H1035V216.7H1038V217.6H1041V216.3H1044V216.9H1047V216.6H1050V217.3H1053V219.1H1056V206H1062V211H1068V216.6H1071V216.9H1074V217.6H1077V216.9H1080V217.7H1083V212.9H1086V217.6H1089V219.8H1092V217.6H1095V216.6H1098V213.2H1101V216.8H1107V216.3H1110V216.8H1113V219H1116V216.6H1119V217.5H1122V213.2H1125V216.8H1128V216.6H1131V214H1134V217.4H1137V213.7H1140V217.6H1143V217.3H1146V216.8H1149V217.6H1152V216.7H1158V216.3H1161V217.6H1164V214.5H1167V217H1170V217.6H1173V216.7H1176V217H1179V216.6H1182V217.3H1185V217.4H1188V216.8H1194V216.4H1197V217.4H1200V212.5H1203V219.3H1206V220H1209V213.9H1212V217H1215V216.9H1221V217.2H1224V217.5H1227V216.5H1230V216.7H1233V216.8H1236V216.6H1242V217.5H1245V216.8H1248V217.7H1251V216.6H1254V219.7H1257V216.4H1260V217.4H1263V214.3H1266V216.5H1269V217.7H1272V217.6H1275V217.5H1278V216.7H1281V213.6H1284V217.2H1287V216.8H1290V216.6H1293V217.1H1296V213.3H1299V217.2H1302V216.7H1305V217.4H1308V212.9H1311V217.1H1314V216.4H1317V217.3H1320V216.7H1323V217.6H1326V217.1H1329V216.9H1332V217.7H1335V216.6H1338V211.8H1341V216.9H1350V216.3H1353V217.2H1356V216.4H1359V216.8H1362V216.5H1365V217H1368V216.5H1371V219.9H1374V211.7H1377V217.7H1380V216.4H1383V216.8H1386V217.2H1389V216.5H1392V216.6H1395V217.5H1398V216.6H1401V216.9H1404V213.7H1407V217.3H1410V216.4H1413V212.8H1416V216.5H1419V217.1H1422V216.7H1425V217.1H1428V217.2H1431V212.9H1434V217H1437V217.4H1440V216.9H1443V214.1H1446V213.3H1449V212.9H1452V216.4H1455V217.4H1458V216.4H1461V216.8H1464V216.5H1467V217.7H1470V217.4H1473V217.7H1476V217.6H1479V216.5H1482V214.2H1485V217.4H1488V217.6H1491V217.4H1494V217H1497V216.6H1500V217H1503V216.4H1506V216.5H1509V217.3H1512V216.5H1518V217.2H1521V217.5H1524V217.1H1527V218.9H1530V217.2H1533V217.4H1536V217.7H1539V216.8H1542V217.6H1545V215H1548V201H1551V204.5H1554V196H1557V194H1560V189H1563V200.5H1572V205H1575V204H1578V194.4H1581V204.5H1587V209.5H1590V202.5H1596V210H1599V205H1602V206.5H1605V210H1611V207H1617V213H1620V212H1623V199H1626V201H1632V206.5H1635V211H1638V212.5H1644V209H1647V211H1665V212H1668V205.5H1671V214H1674V209.5H1677V212.4H1680V208.8H1683V212.2H1686V213.2H1689V212.7H1692V209.4H1695V212.7H1698V212.5H1701V212H1704V210.7H1707V209.4H1710V212.1H1713V212.6H1716V212.7H1719V212H1722V212.1H1725V211.9H1728V213H1731V212.4H1734V211.8H1737V212.6H1740V212.7H1743V213.1H1746V212.1H1749V211.9H1752V212.4H1755V211.9H1758V211.8H1761V213.1H1764V212.1H1767V212.5H1770V212.9H1773V212.2H1776V211.9H1779V212.9H1782V211.8H1785V212.8H1791V209.5H1794V211.9H1797V212.8H1800V213H1803V212.2H1806V212.4H1809V212.5H1812V212.7H1815V212.1H1818V211.8H1821V212.1H1824V213.1H1827V212.3H1833V213.1H1836V212.8H1839V213.2H1842V213H1848V212.8H1851V212.2H1854V208.4H1857V209.7H1860V213.1H1863V209.9H1866V212.8H1872V211.9H1875V212.3H1878V212.9H1881V211.9H1884V213.1H1887V211.9H1890V207.8H1893V212.9H1896V213H1899V210H1902V212.9H1905V212.2H1908V211.8H1911V212.2H1914V212.3H1917V213.1H1920V213H1923V211.8H1926V212.4H1929V212.3H1932V212.6H1935V209H1938V209.5H1941V212.9H1944V211.8H1947V212.5H1950V212.1H1953V212.3H1956V212.2H1962V212.8H1965V212H1968V211.9H1971V212.8H1974V212.7H1977V212.4H1980V208.8H1983V211.8H1986V212.2H1989V212.5H1992V213H1995V212.4H1998V212.9H2001V212.7H2004V212.3H2007V213H2010V212.8H2013V212.4H2016V209.5H2019V213H2022V212.1H2025V212.8H2028V212H2031V212.1H2034V212.5H2037V212.3H2040V213.2H2043V211.9H2049V213.2H2052V212.8H2055V212.1H2058V211.9H2061V209.3H2064V212.9H2067V212.5H2070V212.4H2073V212.6H2076V212.8H2079V212.4H2082V212.8H2085V212.1H2088V213H2091V212.8H2097V212.4H2100V209.6H2103V212.9H2106V212.7H2109V212.4H2112V212.7H2118V212.1H2121V212.9H2124V212.5H2127V211.9H2130V212H2133V213.1H2136V211.9H2139V212.6H2142V212.5H2145V213H2148V212.4H2151V212.1H2154V212.3H2157V212H2160V209.6H2163V209.3H2166V212.4H2169V212.3H2172V212.1H2175V213.1H2178V212.1H2181V212.3H2184V212H2187V212.9H2190V212.5H2193V212.1H2196V212.3H2199V212.9H2202V212.5H2205V208.5H2208V212.3H2211V212.2H2217V208.3H2220V212.2H2226V212.4H2229V212.7H2232V213.1H2235V211.9H2238V213.1H2241V212H2244V210.7H2247V213.1H2250V209.8H2253V212.1H2256V212.3H2259V213.1H2262V212H2265V212.7H2271V212.9H2274V212.1H2277V212.5H2280V212.4H2283V212.6H2286V208.9H2289V211.9H2292V212H2295V212.5H2298V208.9H2301V212.5H2304V212.7H2307V212.3H2310V209.6H2313V209.2H2316V212.8H2319V212.3H2322V212.5H2325V209.3H2328V212.7H2331V213H2334V212.5H2337V212.9H2340V212.4H2343V212.6H2346V212.2H2349V212.4H2352V212.2H2355V213.2H2358V212.9H2361V212.2H2364V212.6H2367V209.1H2370V213H2373V211.9H2376V211.8H2379V213.1H2382V212.7H2385V213.1H2388V212.7H2391V212.8H2397V212.7H2400V210.4H2403V211.9H2406V213.1H2409V212.3H2412V212.9H2415V212.2H2418V212.4H2424V209.7H2427V207.8H2430V212.6H2433V209.5H2436V212.6H2439V213.2H2442V208.8H2445V212.1H2448V208.1H2451V212H2454V211.9H2457V208.2H2460V212.1H2463V208.1H2466V212.8H2469V209.3H2472V212.8H2475V213.1H2478V213.2H2481V208.2H2484V210.2H2487V212.8H2490V213H2493V211.9H2496V212.6H2499V212.7H2502V212.9H2505V212.7H2508V212.4H2511V212.9H2517V207.8H2520V212.8H2523V212.3H2526V213.2H2527" fill="none" stroke="#2a78b4" stroke-width="1.1"/><path d="M11.56,0V248.8M31.56,0V248.8M51.56,0V248.8M71.56,0V248.8M91.56,0V248.8M111.56,0V248.8M131.56,0V248.8M151.56,0V248.8M171.56,0V248.8M191.56,0V248.8M211.56,0V248.8M231.56,0V248.8M251.56,0V248.8M271.56,0V248.8M291.56,0V248.8M311.56,0V248.8M331.56,0V248.8M351.56,0V248.8M371.56,0V248.8M391.56,0V248.8M411.56,0V248.8M431.56,0V248.8M451.56,0V248.8M471.56,0V248.8M491.56,0V248.8M511.56,0V248.8M531.56,0V248.8M551.56,0V248.8M571.56,0V248.8M591.56,0V248.8M611.56,0V248.8M631.56,0V248.8M651.56,0V248.8M671.56,0V248.8M691.56,0V248.8M711.56,0V248.8M731.56,0V248.8M751.56,0V248.8M771.56,0V248.8M791.56,0V248.8M811.56,0V248.8M831.56,0V248.8M851.56,0V248.8M871.56,0V248.8M891.56,0V248.8M911.56,0V248.8M931.56,0V248.8M951.56,0V248.8M971.56,0V248.8M991.56,0V248.8M1011.56,0V248.8M1031.56,0V248.8M1051.56,0V248.8M1071.56,0V248.8M1091.56,0V248.8M1111.56,0V248.8M1131.56,0V248.8M1151.56,0V248.8M1171.56,0V248.8M1191.56,0V248.8M1211.56,0V248.8M1231.56,0V248.8M1251.56,0V248.8M1271.56,0V248.8M1291.56,0V248.8M1311.56,0V248.8M1331.56,0V248.8M1351.56,0V248.8M1371.56,0V248.8M1391.56,0V248.8M1411.56,0V248.8M1431.56,0V248.8M1451.56,0V248.8M1471.56,0V248.8M1491.56,0V248.8M1511.56,0V248.8M1531.56,0V248.8M1551.56,0V248.8M1571.56,0V248.8M1591.56,0V248.8M1611.56,0V248.8M1631.56,0V248.8M1651.56,0V248.8M1671.56,0V248.8M1691.56,0V248.8M1711.56,0V248.8M1731.56,0V248.8M1751.56,0V248.8M1771.56,0V248.8M1791.56,0V248.8M1811.56,0V248.8M1831.56,0V248.8M1851.56,0V248.8M1871.56,0V248.8M1891.56,0V248.8M1912.50,0V248.8M1932.50,0V248.8M1952.50,0V248.8M1972.50,0V248.8M1992.50,0V248.8M2012.50,0V248.8M2032.50,0V248.8M2052.50,0V248.8M2072.50,0V248.8M2092.50,0V248.8M2112.50,0V248.8M2132.50,0V248.8M2152.50,0V248.8M2172.50,0V248.8M2192.50,0V248.8M2212.50,0V248.8M2232.50,0V248.8M2252.50,0V248.8M2272.50,0V248.8M2292.50,0V248.8M2312.50,0V248.8M2332.50,0V248.8M2352.50,0V248.8M2372.50,0V248.8M2392.50,0V248.8M2412.50,0V248.8M2432.50,0V248.8M2452.50,0V248.8M2472.50,0V248.8M2492.50,0V248.8M2512.50,0V248.8" stroke="#24364a" stroke-width="1.2" fill="none"/><path d="M0,8.5H2527M0,28.5H2527M0,48.5H2527M0,68.5H2527M0,88.5H2527M0,108.5H2527M0,128.5H2527M0,148.5H2527M0,168.5H2527M0,188.5H2527M0,208.5H2527M0,228.5H2527M0,248.5H2527" stroke="#24364a" stroke-width="1.2" fill="none"/><rect x="0" y="0" width="2527" height="1" fill="#a0a0a0"/></svg><div class="win" style="top:959px;height:303px;background:#f3f3f3"><div class="ic" style="left:13px;top:11px"><svg width="32" height="32"><use href="#hwi"/></svg></div><div class="wt" style="transform:scaleX(0.9017)">GPU Clock</div><svg class="cx" width="22" height="22" viewBox="0 0 22 22"><path d="M1.5 1.5L20.5 20.5M20.5 1.5L1.5 20.5" stroke="#8a8a8a" stroke-width="1.6" fill="none"/></svg><div class="rp" style="top:56px;height:247px"></div><div class="fld" style="top:57px"><span>3000.0</span></div><div class="fld" style="top:101px;width:126px"><span>1,567.0 MHz</span></div><div class="btn" style="top:159px"><span>Auto Fit</span></div><div class="btn" style="top:208px"><span>Reset</span></div><div class="fld" style="top:268px"><span>0.0</span></div><div class="rg"></div></div><svg class="g" style="left:14px;top:1015px" width="2527" height="244.8" viewBox="0 0 2527 244.8"><defs><linearGradient id="f4" gradientUnits="userSpaceOnUse" x1="0" y1="0" x2="0" y2="244.8"><stop offset="0" stop-color="#7b0000"/><stop offset="0.812" stop-color="#7b0000"/><stop offset="1" stop-color="#450916"/></linearGradient></defs><rect width="2527" height="244.8" fill="#e0f7ff"/><path d="M0,244.8H0V117H3V104H9V140H12V123.5H15V124.1H18V123.7H21V120H24V126H27V131H30V123H33V115.4H36V115.5H39V113.3H42V113.1H45V116.3H48V111.6H54V113.5H57V112.2H60V113.1H63V112.2H66V102.6H69V111.2H72V110.9H75V109.2H78V101.1H81V111.2H84V110.8H90V110H93V110.1H96V101.3H99V109.5H102V110.1H105V109.8H108V102.5H111V110.5H114V110.7H117V111.1H120V103.2H123V111.4H126V110.4H129V109.5H132V101.2H135V111.1H138V109.2H141V101.7H144V110.9H147V109.1H153V109.8H156V111.5H159V101.2H162V101.5H165V110H168V103.2H171V109.8H174V102.2H177V110.3H180V110.5H183V110.6H186V110.3H189V101.8H192V111.4H195V102H198V102.5H201V102.6H204V110.2H207V109.9H210V101.2H213V110.7H216V109.6H219V101.9H222V102.5H225V102.9H228V109.1H231V101.6H234V101.5H237V110.1H240V101.8H243V111.1H246V101.8H249V110.6H252V101.3H255V103H258V101.7H261V111H264V101.3H267V109.7H270V102H273V110H276V101H279V111.4H282V111.5H285V111.4H288V109.6H291V111.1H294V101.9H297V102.5H300V109.7H303V109.1H306V110.7H309V111.2H312V102.9H315V102.7H318V110.3H321V111.3H324V103.2H327V110.2H330V102.3H333V103H336V111.3H339V102.6H342V101.7H345V109.7H348V110.1H351V101.1H354V101.2H357V111.4H360V109.2H363V101.9H366V110.6H369V101.8H372V109.3H375V101.2H378V102.5H381V103H384V110.6H387V109.9H390V110.8H393V110.7H396V109.6H399V102.1H402V110.1H405V103.2H408V102.2H411V109.3H414V110.7H417V111H420V110.8H423V109.3H426V102.9H429V101.2H432V101.1H435V103.1H438V110.7H441V111.4H444V102.9H447V110.3H450V109.3H453V101.8H456V110.4H459V101.6H462V110.5H465V102H468V109.9H471V109.2H474V111.4H477V102.7H480V110.9H483V110.3H486V110.6H489V102.9H492V111.3H495V110.1H498V101.5H501V101.6H504V110.7H507V109.7H510V110H513V101.5H516V109.1H519V101.9H522V109.8H525V109.4H528V110.2H534V111.1H537V110.2H540V111.1H543V110.8H546V101.6H549V110.8H552V111.4H555V101.6H558V109.5H561V111.1H564V109.6H567V109.8H570V101.2H573V101.9H576V110.5H579V102.1H582V102.5H585V102.4H588V102.7H591V109.3H594V103.4H597V109.9H600V102.7H603V110.6H606V109.7H609V111.4H612V102.2H615V109.9H618V110.7H621V109.5H624V103.2H627V103.3H630V102.8H633V110.5H636V110.6H639V101.2H642V110.8H645V110.4H648V102H651V102.3H654V109.6H657V102H660V110.4H663V109.9H666V101.2H669V109.3H672V101.5H675V110H678V111H681V102H684V109.5H687V101.6H690V103H693V111.2H696V110H699V110.5H702V111.4H705V109.7H708V110.2H711V102.9H714V110.7H717V110.3H720V109.5H723V109.1H726V110.6H729V110.4H732V103H735V101.9H738V102.3H741V103.2H744V103.1H747V110.5H750V110.8H753V109.9H756V111.3H759V110.1H762V101.1H765V101.4H768V110.2H771V110.3H774V102.2H777V110.9H780V109.5H783V101.9H786V110.3H789V101.5H792V102.1H795V101.4H798V101.1H801V102.2H804V102.1H807V110H810V109.1H813V103.4H816V102.2H819V109.4H822V101.1H825V103H828V110.2H831V101.7H834V111H837V102.7H840V111.4H843V101.2H846V101.1H849V110.6H852V109.5H855V110.2H858V111.3H861V102.5H864V101.7H867V102H870V109.8H873V102.8H876V110.8H879V110.4H882V109.9H885V109.6H888V101.4H891V110.8H894V102.2H897V109.4H900V109.1H903V110.9H906V103.1H909V110.6H912V111.2H918V101.2H921V110H924V109.3H927V102.6H930V101.4H933V110.6H936V103.4H939V109.6H942V110H945V110.5H948V101.4H951V109.2H954V103.4H957V109.5H960V109.2H963V109.6H966V110.5H969V110.9H972V109.9H975V103.1H978V110.5H981V109.5H984V110.2H987V102.2H990V109.2H993V110.8H996V110.6H999V103.5H1002V109.8H1005V101.4H1008V111.3H1011V111.2H1014V110.5H1017V110.3H1020V111.4H1026V110.9H1029V111.5H1032V109.7H1035V102.8H1038V109.7H1041V102.9H1044V109.7H1047V109.9H1050V101.3H1053V109.7H1056V102.9H1059V110.8H1062V111.4H1065V101.8H1068V110.2H1071V103.1H1074V109.7H1077V111.2H1080V103H1083V102.3H1086V101.1H1089V109.5H1092V110.2H1095V111H1098V101H1101V101.1H1104V101.8H1107V109.6H1110V101.1H1113V110.1H1116V110.7H1119V101.3H1122V110.9H1125V110.3H1128V101.4H1131V109H1134V111.2H1137V110.2H1140V111.3H1143V110.5H1146V101.5H1149V110.7H1152V110.4H1155V109.9H1158V111H1161V101.8H1164V110.3H1167V111.1H1170V111.3H1173V109.1H1176V110.4H1179V109.7H1182V102.7H1185V109.9H1188V111.2H1191V103.3H1194V103.1H1197V103.4H1200V102H1203V101.6H1209V102.3H1212V110.9H1215V110.6H1218V103.4H1221V102.2H1224V109.7H1227V103.4H1230V109.4H1236V110.7H1239V102.9H1242V103.1H1245V103.4H1248V101.3H1251V110H1254V101.4H1257V103.3H1263V111.5H1266V103.4H1269V110.2H1272V101.9H1275V110.9H1278V110.4H1281V110.3H1287V109.5H1290V111.3H1293V109.4H1296V101.7H1299V103.4H1302V110H1305V103.2H1308V111H1311V110.7H1314V102.4H1317V102.5H1320V109.8H1323V101.9H1326V110.5H1329V111.3H1332V103.4H1335V102.3H1338V102.6H1341V109.7H1344V110.1H1347V110.3H1350V111.5H1353V110.1H1356V109.2H1359V111.1H1362V109.1H1365V110H1368V102.4H1371V111.2H1377V102.3H1380V102.6H1383V111.2H1386V101.9H1389V101.2H1392V101.1H1395V110.3H1401V111.1H1404V111.3H1407V103.2H1410V109.9H1413V101.5H1416V111.1H1419V101.9H1422V109H1425V102H1428V110.3H1431V110.6H1434V103.4H1437V102.1H1440V110.9H1443V102.2H1446V110.1H1449V102H1452V110.5H1455V101.2H1458V103.3H1461V110.3H1464V102.2H1467V111.1H1470V109.7H1473V110.7H1476V103.2H1479V109.3H1482V102.9H1485V111.3H1488V103.8H1491V107H1494V102H1500V107H1503V113H1506V109H1509V102H1512V113H1515V112H1518V106H1521V102H1524V112H1527V102H1533V113H1536V112H1539V113H1542V138H1545V107H1548V112H1551V113H1557V128H1560V123H1563V112H1566V109H1569V120H1575V109H1581V112H1584V116H1587V106H1590V107H1596V115H1599V116H1602V173H1605V102H1608V101H1614V102H1620V115H1623V118H1626V127H1629V115H1632V117H1635V109H1638V113H1641V116H1653V115.2H1656V116H1692V115.2H1695V116H1707V115.2H1710V112.5H1779V111.7H1782V112.5H1893V116H1902V115.2H1905V116H1962V115.2H1965V116H1995V115.2H1998V116H2028V112.5H2121V111.7H2124V112.5H2151V111.7H2154V112.5H2190V116H2208V115.2H2211V116H2235V123.2H2238V116H2247V115.2H2250V116H2298V112.5H2316V111.7H2322V112.5H2355V111.7H2358V112.5H2412V111.7H2415V112.5H2418V111.7H2421V112.5H2430V111.7H2433V112.5H2460V111.7H2463V112.5H2478V116H2499V115.2H2505V116H2527V244.8Z" fill="url(#f4)"/><path d="M11.56,0V244.8M31.56,0V244.8M51.56,0V244.8M71.56,0V244.8M91.56,0V244.8M111.56,0V244.8M131.56,0V244.8M151.56,0V244.8M171.56,0V244.8M191.56,0V244.8M211.56,0V244.8M231.56,0V244.8M251.56,0V244.8M271.56,0V244.8M291.56,0V244.8M311.56,0V244.8M331.56,0V244.8M351.56,0V244.8M371.56,0V244.8M391.56,0V244.8M411.56,0V244.8M431.56,0V244.8M451.56,0V244.8M471.56,0V244.8M491.56,0V244.8M511.56,0V244.8M531.56,0V244.8M551.56,0V244.8M571.56,0V244.8M591.56,0V244.8M611.56,0V244.8M631.56,0V244.8M651.56,0V244.8M671.56,0V244.8M691.56,0V244.8M711.56,0V244.8M731.56,0V244.8M751.56,0V244.8M771.56,0V244.8M791.56,0V244.8M811.56,0V244.8M831.56,0V244.8M851.56,0V244.8M871.56,0V244.8M891.56,0V244.8M911.56,0V244.8M931.56,0V244.8M951.56,0V244.8M971.56,0V244.8M991.56,0V244.8M1011.56,0V244.8M1031.56,0V244.8M1051.56,0V244.8M1071.56,0V244.8M1091.56,0V244.8M1111.56,0V244.8M1131.56,0V244.8M1151.56,0V244.8M1171.56,0V244.8M1191.56,0V244.8M1211.56,0V244.8M1231.56,0V244.8M1251.56,0V244.8M1271.56,0V244.8M1291.56,0V244.8M1311.56,0V244.8M1331.56,0V244.8M1351.56,0V244.8M1371.56,0V244.8M1391.56,0V244.8M1411.56,0V244.8M1431.56,0V244.8M1451.56,0V244.8M1471.56,0V244.8M1491.56,0V244.8M1511.56,0V244.8M1531.56,0V244.8M1551.56,0V244.8M1571.56,0V244.8M1591.56,0V244.8M1611.56,0V244.8M1631.56,0V244.8M1651.56,0V244.8M1671.56,0V244.8M1691.56,0V244.8M1711.56,0V244.8M1731.56,0V244.8M1751.56,0V244.8M1771.56,0V244.8M1791.56,0V244.8M1811.56,0V244.8M1831.56,0V244.8M1851.56,0V244.8M1871.56,0V244.8M1891.56,0V244.8M1912.50,0V244.8M1932.50,0V244.8M1952.50,0V244.8M1972.50,0V244.8M1992.50,0V244.8M2012.50,0V244.8M2032.50,0V244.8M2052.50,0V244.8M2072.50,0V244.8M2092.50,0V244.8M2112.50,0V244.8M2132.50,0V244.8M2152.50,0V244.8M2172.50,0V244.8M2192.50,0V244.8M2212.50,0V244.8M2232.50,0V244.8M2252.50,0V244.8M2272.50,0V244.8M2292.50,0V244.8M2312.50,0V244.8M2332.50,0V244.8M2352.50,0V244.8M2372.50,0V244.8M2392.50,0V244.8M2412.50,0V244.8M2432.50,0V244.8M2452.50,0V244.8M2472.50,0V244.8M2492.50,0V244.8M2512.50,0V244.8" stroke="#24364a" stroke-width="1.2" fill="none"/><path d="M0,4.5H2527M0,24.5H2527M0,44.5H2527M0,64.5H2527M0,84.5H2527M0,104.5H2527M0,124.5H2527M0,144.5H2527M0,164.5H2527M0,184.5H2527M0,204.5H2527M0,224.5H2527M0,244.5H2527" stroke="#24364a" stroke-width="1.2" fill="none"/><rect x="0" y="0" width="2527" height="1" fill="#a0a0a0"/></svg><div class="win" style="top:1277px;height:305px;background:#d9d9d9"><div class="tg" style="top:40px"></div><div class="ic" style="left:13px;top:11px"><svg width="32" height="32"><use href="#hwi"/></svg></div><div class="wt" style="transform:scaleX(0.9391)">GPU Temperature</div><svg class="cx" width="22" height="22" viewBox="0 0 22 22"><path d="M1.5 1.5L20.5 20.5M20.5 1.5L1.5 20.5" stroke="#8a8a8a" stroke-width="1.6" fill="none"/></svg><div class="rp" style="top:56px;height:249px"></div><div class="fld" style="top:57px"><span><i>10</i>0.0</span></div><div class="fld" style="top:103px;width:126px"><span>74.2 °C</span></div><div class="btn" style="top:161px"><span>Auto Fit</span></div><div class="btn" style="top:210px"><span>Reset</span></div><div class="fld" style="top:270px"><span>0.0</span></div><div class="sw" style="left:2538px;top:58px;height:18px;width:9px;background:#f0f0f0;border:0;border-radius:0"></div><div class="sw" style="left:2546px;top:56px;height:21px;width:19px;background:#3a0d18;border:0;border-radius:0"></div><div class="sw" style="left:2586px;top:56px;height:1.500px;width:19px;background:#d5e8f0;border:0;border-radius:0"></div><div class="sw" style="left:2626px;top:55.5px;height:2px;width:19px;background:#1d0a1b;border:0;border-radius:0"></div><div class="rg"></div></div><svg class="g" style="left:14px;top:1333px" width="2527" height="246.8" viewBox="0 0 2527 246.8"><defs><linearGradient id="f5" gradientUnits="userSpaceOnUse" x1="0" y1="0" x2="0" y2="246.8"><stop offset="0" stop-color="#2c0b1a"/><stop offset="0.25" stop-color="#290a1a"/><stop offset="0.41" stop-color="#1d0a1b"/><stop offset="1" stop-color="#1d0a1b"/></linearGradient><linearGradient id="b5" x1="0" y1="0" x2="0" y2="1"><stop offset="0" stop-color="#d6e6ec"/><stop offset="0.3" stop-color="#e0f7ff"/></linearGradient></defs><rect width="2527" height="246.8" fill="url(#b5)"/><path d="M0,246.8H0V50H27V49H63V49.4H66V50H69V50.6H72V51.1H75V51.6H78V52.1H81V52.6H84V53.1H87V53.6H90V54H93V54.4H96V54.8H99V55.2H102V55.6H105V56H108V56.3H111V56.7H114V57H117V57.3H120V57.7H123V58H126V58.2H129V58.5H132V58.8H135V59.1H138V59.3H141V59.6H144V59.8H147V60H150V60.2H153V60.4H156V60.6H159V60.8H162V61H165V61.2H168V61.4H171V61.6H174V61.7H177V61.9H180V62H183V62.2H186V62.3H189V62.5H192V62.6H195V62.7H198V62.8H201V63H204V63.1H207V63.2H210V63.3H213V63.4H216V63.5H219V63.6H222V63.7H225V63.8H228V63.9H231V64H237V64.1H240V64.2H243V64.3H249V64.4H252V64.5H258V64.6H261V64.7H267V64.8H273V64.9H279V65H285V65.1H294V65.2H300V65.3H309V65.4H318V65.5H330V65.6H342V65.7H357V65.8H372V65.9H393V66H423V66.1H465V66.2H468V65H987V63.5H999V62.5H1002V63.5H1008V62.5H1011V63.5H1017V62.5H1020V63.5H1074V62.5H1077V63.5H1098V62.5H1101V63.5H1107V62.5H1110V63.5H1134V62.5H1140V63.5H1143V62.5H1149V63.5H1164V62.5H1167V63.5H1179V62.5H1182V63.5H1215V62.5H1218V63.5H1230V62.5H1233V63.5H1254V62.5H1257V63.5H1275V62.5H1278V63.5H1287V62.5H1290V63.5H1341V62.5H1344V63.5H1359V62.5H1365V63.5H1389V62.5H1392V63.5H1398V62.5H1401V63.5H1431V62.5H1437V63.5H1446V62.5H1449V63.5H1455V62.5H1458V63.5H1485V62.5H1488V63.5H1506V62.5H1509V63.5H1539V62.5H1542V63.5H1566V62.5H1569V63.5H1581V62.5H1584V63.5H1593V62.5H1596V63.5H1605V62.5H1608V63.5H1617V62.5H1620V63.5H1668V66.2H1686V66.1H1692V66H1695V65.9H1698V65.8H1704V65.6H1707V65.5H1710V65.4H1713V65.3H1716V65.1H1719V65H1722V64.8H1725V64.6H1728V64.5H1731V64.3H1734V64.1H1737V63.9H1740V63.7H1743V63.5H1746V63.3H1749V63.1H1752V62.9H1755V62.7H1758V62.5H1761V62.3H1764V62.1H1767V61.9H1770V61.7H1773V61.6H1776V61.4H1779V61.2H1782V61.1H1785V60.9H1788V60.8H1791V60.6H1794V60.5H1797V60.4H1800V60.3H1803V60.2H1806V60.1H1809V60H1812V59.9H1818V59.8H1836V59.9H1842V60H1848V60.1H1851V60.2H1854V60.3H1857V60.4H1860V60.6H1863V60.7H1866V60.8H1869V61H1872V61.2H1875V61.3H1878V61.5H1881V61.7H1884V61.9H1887V62.1H1890V62.2H1893V62.4H1896V62.6H1899V62.8H1902V63H1905V63.2H1908V63.4H1911V63.6H1914V63.8H1917V64H1920V64.2H1923V64.4H1926V64.6H1929V64.7H1932V64.9H1935V65.1H1938V65.2H1941V65.4H1944V65.5H1947V65.6H1950V65.7H1953V65.8H1956V65.9H1959V66H1965V66.1H1971V66.2H1986V66.1H1992V66H1998V65.9H2001V65.8H2004V65.7H2007V65.6H2010V65.5H2013V65.3H2016V65.2H2019V65H2022V64.9H2025V64.7H2028V64.5H2031V64.4H2034V64.2H2037V64H2040V63.8H2043V63.6H2046V63.4H2049V63.2H2052V63H2055V62.8H2058V62.6H2061V62.4H2064V62.2H2067V62H2070V61.8H2073V61.7H2076V61.5H2079V61.3H2082V61.1H2085V61H2088V60.8H2091V60.7H2094V60.5H2097V60.4H2100V60.3H2103V60.2H2106V60.1H2109V60H2115V59.9H2121V59.8H2139V59.9H2145V60H2148V60.1H2151V60.2H2154V60.3H2157V60.4H2160V60.5H2163V60.6H2166V60.8H2169V60.9H2172V61.1H2175V61.2H2178V61.4H2181V61.6H2184V61.8H2187V62H2190V62.2H2193V62.3H2196V62.5H2199V62.7H2202V62.9H2205V63.1H2208V63.3H2211V63.5H2214V63.7H2217V63.9H2220V64.1H2223V64.3H2226V64.5H2229V64.7H2232V64.8H2235V65H2238V65.1H2241V65.3H2244V65.4H2247V65.5H2250V65.7H2253V65.8H2256V65.9H2262V66H2265V66.1H2271V66.2H2289V66.1H2295V66H2298V65.9H2301V65.8H2307V65.6H2310V65.5H2313V65.4H2316V65.3H2319V65.1H2322V65H2325V64.8H2328V64.6H2331V64.5H2334V64.3H2337V64.1H2340V63.9H2343V63.7H2346V63.5H2349V63.3H2352V63.1H2355V62.9H2358V62.7H2361V62.5H2364V62.3H2367V62.1H2370V61.9H2373V61.7H2376V61.6H2379V61.4H2382V61.2H2385V61.1H2388V60.9H2391V60.8H2394V60.6H2397V60.5H2400V60.4H2403V60.3H2406V60.2H2409V60.1H2412V60H2415V59.9H2421V59.8H2439V59.9H2445V60H2451V60.1H2454V60.2H2457V60.3H2460V60.4H2463V60.6H2466V60.7H2469V60.8H2472V61H2475V61.2H2478V61.3H2481V61.5H2484V61.7H2487V61.9H2490V62.1H2493V62.2H2496V62.4H2499V62.6H2502V62.8H2505V63H2508V63.2H2511V63.4H2514V63.6H2517V63.8H2520V64H2523V64.2H2526V64.4H2527V246.8Z" fill="url(#f5)"/><path d="M11.56,0V246.8M31.56,0V246.8M51.56,0V246.8M71.56,0V246.8M91.56,0V246.8M111.56,0V246.8M131.56,0V246.8M151.56,0V246.8M171.56,0V246.8M191.56,0V246.8M211.56,0V246.8M231.56,0V246.8M251.56,0V246.8M271.56,0V246.8M291.56,0V246.8M311.56,0V246.8M331.56,0V246.8M351.56,0V246.8M371.56,0V246.8M391.56,0V246.8M411.56,0V246.8M431.56,0V246.8M451.56,0V246.8M471.56,0V246.8M491.56,0V246.8M511.56,0V246.8M531.56,0V246.8M551.56,0V246.8M571.56,0V246.8M591.56,0V246.8M611.56,0V246.8M631.56,0V246.8M651.56,0V246.8M671.56,0V246.8M691.56,0V246.8M711.56,0V246.8M731.56,0V246.8M751.56,0V246.8M771.56,0V246.8M791.56,0V246.8M811.56,0V246.8M831.56,0V246.8M851.56,0V246.8M871.56,0V246.8M891.56,0V246.8M911.56,0V246.8M931.56,0V246.8M951.56,0V246.8M971.56,0V246.8M991.56,0V246.8M1011.56,0V246.8M1031.56,0V246.8M1051.56,0V246.8M1071.56,0V246.8M1091.56,0V246.8M1111.56,0V246.8M1131.56,0V246.8M1151.56,0V246.8M1171.56,0V246.8M1191.56,0V246.8M1211.56,0V246.8M1231.56,0V246.8M1251.56,0V246.8M1271.56,0V246.8M1291.56,0V246.8M1311.56,0V246.8M1331.56,0V246.8M1351.56,0V246.8M1371.56,0V246.8M1391.56,0V246.8M1411.56,0V246.8M1431.56,0V246.8M1451.56,0V246.8M1471.56,0V246.8M1491.56,0V246.8M1511.56,0V246.8M1531.56,0V246.8M1551.56,0V246.8M1571.56,0V246.8M1591.56,0V246.8M1611.56,0V246.8M1631.56,0V246.8M1651.56,0V246.8M1671.56,0V246.8M1691.56,0V246.8M1711.56,0V246.8M1731.56,0V246.8M1751.56,0V246.8M1771.56,0V246.8M1791.56,0V246.8M1811.56,0V246.8M1831.56,0V246.8M1851.56,0V246.8M1871.56,0V246.8M1891.56,0V246.8M1912.50,0V246.8M1932.50,0V246.8M1952.50,0V246.8M1972.50,0V246.8M1992.50,0V246.8M2012.50,0V246.8M2032.50,0V246.8M2052.50,0V246.8M2072.50,0V246.8M2092.50,0V246.8M2112.50,0V246.8M2132.50,0V246.8M2152.50,0V246.8M2172.50,0V246.8M2192.50,0V246.8M2212.50,0V246.8M2232.50,0V246.8M2252.50,0V246.8M2272.50,0V246.8M2292.50,0V246.8M2312.50,0V246.8M2332.50,0V246.8M2352.50,0V246.8M2372.50,0V246.8M2392.50,0V246.8M2412.50,0V246.8M2432.50,0V246.8M2452.50,0V246.8M2472.50,0V246.8M2492.50,0V246.8M2512.50,0V246.8" stroke="#24364a" stroke-width="1.2" fill="none"/><path d="M0,6.5H2527M0,26.5H2527M0,46.5H2527M0,66.5H2527M0,86.5H2527M0,106.5H2527M0,126.5H2527M0,146.5H2527M0,166.5H2527M0,186.5H2527M0,206.5H2527M0,226.5H2527M0,246.5H2527" stroke="#24364a" stroke-width="1.2" fill="none"/><rect x="0" y="0" width="2527" height="1" fill="#a0a0a0"/></svg><div class="win" style="top:1597px;height:457px;background:#f3f3f3"><div class="ic" style="left:13px;top:11px"><svg width="32" height="32"><use href="#hwi"/></svg></div><div class="wt" style="transform:scaleX(0.9181)">GPU Power (Total)</div><svg class="cx" width="22" height="22" viewBox="0 0 22 22"><path d="M1.5 1.5L20.5 20.5M20.5 1.5L1.5 20.5" stroke="#8a8a8a" stroke-width="1.6" fill="none"/></svg><div class="rp" style="top:56px;height:401px"></div><div class="fld" style="top:57px"><span>150.000</span></div><div class="fld" style="top:255px;width:126px"><span>100.869 W</span></div><div class="btn" style="top:313px"><span>Auto Fit</span></div><div class="btn" style="top:362px"><span>Reset</span></div><div class="fld" style="top:422px"><span>0.000</span></div><div class="sw" style="left:2545px;top:204px;background:#3a789a"></div><div class="sw" style="left:2585px;top:204px;background:#e0f7ff"></div><div class="sw" style="left:2625px;top:204px;background:#263848"></div><div class="rg"></div></div><svg class="g" style="left:14px;top:1653px" width="2527" height="398.8" viewBox="0 0 2527 398.8"><defs><linearGradient id="f6" gradientUnits="userSpaceOnUse" x1="0" y1="0" x2="0" y2="398.8"><stop offset="0" stop-color="#2b5f5f"/><stop offset="0.466" stop-color="#2b5f5f"/><stop offset="0.675" stop-color="#263848"/><stop offset="0.822" stop-color="#263848"/><stop offset="1" stop-color="#1f1e2f"/></linearGradient></defs><rect width="2527" height="398.8" fill="#e0f7ff"/><path d="M0,398.8H0V85H9V106.6H12V122H15V117H18V113.5H21V107.8H24V124H27V120.8H30V114.3H33V127H36V108.2H39V137H42V111.2H45V115.9H48V104.5H51V120.5H54V108.1H60V103.9H63V124.9H66V98.9H69V107H72V84.4H75V84.6H78V94H81V96.6H84V95.7H87V82.7H90V94.9H93V94.7H96V100.2H99V99.1H102V90.6H105V108.2H108V100.1H111V95.9H114V96.1H117V91.3H120V98.7H123V97H126V97.4H129V94.8H132V97.5H135V87.3H138V100.4H141V97.8H144V82.5H147V99.2H150V98.5H153V100.2H156V96.3H159V100.7H162V100.1H165V104.3H168V83.1H171V99.2H174V93.4H177V95.3H180V87.3H183V100.2H186V99H189V95H192V97.2H195V101.3H198V99.4H201V97.8H204V97.6H207V95.5H210V95.2H213V93.1H216V114H219V98.2H222V103.1H225V100.7H228V89.2H231V93.2H234V94.1H237V89.4H240V95.6H243V89.1H246V96H249V87H252V100H255V91.2H258V93.5H261V94.4H264V95H267V88H270V95.5H273V95.4H276V97.4H279V93.8H282V97.1H285V100.7H288V98.6H291V86.2H294V100.8H297V95.5H300V89.2H303V99.5H306V96.6H309V93.2H312V96.5H315V138H318V86.9H321V95H324V99.5H327V102H330V96.9H333V92.4H336V96.9H339V147H342V98H345V75H348V98.6H351V95H354V96.1H357V99.6H360V94.1H363V95.5H366V94.2H369V93.6H372V100.5H375V84.1H378V103.6H381V98.1H384V95.1H387V103.6H390V94.2H393V94.6H396V95.2H399V100.5H402V96.5H405V87.8H408V82.5H411V93.3H414V100.5H417V93.2H420V93.3H423V101.6H426V90.6H429V96.6H432V84.8H435V99.6H438V85.8H441V105.2H444V99.7H447V90.8H450V93.6H453V99H456V83.2H459V97.9H462V96.8H465V100.8H468V95.4H471V95.5H474V97.1H477V97.9H480V93.3H483V98.4H486V81.9H489V97.3H492V98.5H495V85.8H498V87.5H501V97.3H504V94.4H507V85.3H510V99.5H513V106.1H516V100.2H519V100.3H522V96.1H525V100.5H528V93.1H531V97.9H534V99H537V94.3H540V97.3H543V94.7H546V97.4H549V98.9H552V88.2H555V94.4H558V99.5H561V86.2H564V87.7H567V82.3H570V97.2H573V91H576V96.4H579V99.2H582V103.8H585V96H588V95.1H591V85.3H594V97.7H597V98.9H600V100.9H603V86.2H606V97.7H609V94.9H612V98.9H615V89.5H618V99.6H621V96.7H624V98H627V98.5H630V99H633V95H636V99.3H639V94.6H642V93.4H645V86.6H648V95.1H651V99.6H654V97H657V94.7H660V95.7H663V90.7H666V93.5H669V84.4H672V87.7H675V97.8H678V97H681V96H684V98.1H687V95.8H690V98.1H693V69H696V93.2H699V103.2H702V18H705V94.3H708V95.6H711V89H714V94.2H717V103.4H720V89.6H723V106.3H726V64H729V92H732V97.6H735V97.2H738V93.1H741V95.5H744V95.9H747V93.3H750V100.1H753V85.3H756V93.6H759V99.2H762V90.2H765V98.3H768V96.1H771V97H774V95.6H777V92.3H780V93.9H783V101.8H786V99.9H789V98.5H792V96.8H795V87.5H798V95.4H801V94.5H804V99.6H807V94.7H810V95.7H813V94.8H816V96.6H819V97.2H822V95.2H825V99.7H828V96.8H831V72H834V94.2H837V99.2H840V100.7H843V95H846V95.6H849V93.3H852V102.6H855V99.4H858V99H861V100H864V99.6H867V97H870V97.1H873V69H876V102.1H879V92.1H882V93.7H885V89.4H888V93.9H891V95.4H894V98.7H897V96.1H900V93.9H903V98.6H906V107.6H909V95.5H912V92.7H915V100.5H918V98.1H921V95.2H924V93H927V94.3H930V83.5H933V94.4H936V97.4H939V99.8H942V94.4H945V93.8H948V99.8H951V96.2H954V99.8H957V103.8H960V95.4H963V100H966V93.7H969V100.3H972V98.5H975V94.5H978V100.9H981V89.9H984V96.9H987V94.3H990V94H993V92H996V94.1H999V85.5H1002V100.7H1005V97.6H1008V97.8H1011V96.5H1014V102.1H1017V82.6H1020V128H1023V100.6H1026V88.5H1029V87.6H1032V94.9H1035V95.3H1038V98.3H1041V99.2H1044V95.5H1047V99H1053V107.5H1056V100.8H1059V110H1062V95.1H1065V96.4H1068V103.2H1071V98.1H1074V102.7H1077V94.6H1080V98.6H1083V97.4H1086V104.8H1089V96.4H1092V105.6H1095V159H1098V86H1101V100.9H1104V98H1107V96.9H1110V92.9H1113V96H1116V86.3H1119V117H1122V95.7H1125V94.8H1128V94.4H1131V98.8H1134V93.7H1137V99.8H1140V99.9H1143V94.3H1146V99.6H1149V87.7H1152V97.7H1155V96.6H1158V100.7H1161V104.5H1164V87.4H1167V93.9H1170V98.2H1173V99.4H1176V93.7H1179V96.2H1182V100.8H1185V95H1188V97H1191V93.8H1194V98.2H1197V99.1H1200V99.4H1203V87H1206V104.5H1209V95.2H1212V96.4H1215V100.4H1218V96H1221V100.6H1224V32H1227V99.3H1230V95.3H1233V123H1236V98.3H1239V100.6H1242V99.3H1245V100.2H1248V90.3H1251V107.2H1254V97.2H1257V97.1H1260V100.2H1263V94.2H1266V96.2H1269V100.7H1272V101H1275V84.1H1278V93.4H1281V97.8H1284V97.5H1287V86H1290V95.2H1293V100.4H1296V105.6H1299V96.1H1302V96H1305V89.4H1308V94H1311V97.4H1314V95.5H1317V98.7H1320V104.4H1323V93.4H1326V95.5H1329V94.1H1332V88H1335V99.8H1338V97.2H1341V108H1344V99.3H1347V95.8H1350V105.2H1353V98.1H1356V95H1359V86.4H1362V98.2H1365V91.8H1368V105.3H1371V77H1374V98.1H1377V110H1380V106.7H1383V99.8H1386V92.8H1389V96.4H1392V95.4H1395V94.7H1398V94.5H1401V95.7H1404V119H1407V98.1H1410V96.3H1413V91.4H1416V97.8H1419V72H1422V121H1425V99.7H1428V96.5H1431V94.2H1434V88.8H1437V100.6H1440V105H1443V89.1H1446V96.8H1449V93.5H1452V98.8H1455V94.4H1458V96.5H1461V96.9H1464V97.1H1467V99.5H1470V96.9H1473V84.1H1476V99.5H1479V99.9H1482V101H1485V93.4H1488V97.6H1491V97.2H1494V27H1497V99.4H1500V93.2H1503V93H1506V93.9H1509V94.3H1512V100.7H1515V90.9H1518V30H1521V88.9H1524V100.1H1527V87.7H1530V89.2H1533V99.8H1536V97.5H1539V95.8H1542V323H1545V116.5H1551V120.9H1554V118.4H1557V110.2H1560V111.1H1563V113.3H1566V113.8H1569V117.6H1572V112.1H1575V115.7H1578V114.4H1581V112.7H1584V116.7H1587V114.2H1590V120.8H1593V110.6H1596V119.8H1599V116.6H1602V323H1605V96.1H1608V104.1H1611V106.2H1614V99.9H1617V105H1620V102.4H1623V96.3H1626V135H1629V118.8H1632V120H1635V121.6H1638V122.6H1641V123.1H1644V121.7H1647V124.1H1650V121.9H1653V124H1656V124.1H1659V126.3H1665V126.6H1668V127.7H1671V126.7H1674V127.2H1677V125.5H1680V126.8H1683V126H1686V128.7H1689V125.6H1692V129.6H1695V128H1698V127.2H1701V125.6H1704V127.2H1707V127.8H1710V125.7H1713V129.9H1716V126.8H1719V127.2H1722V126.4H1725V126.9H1728V126.4H1731V129.3H1734V125.4H1737V126.8H1740V128H1743V127.4H1746V126.6H1749V127.4H1752V125.3H1755V126.5H1758V127.2H1761V139H1764V127.2H1767V127.1H1770V128.3H1773V126.4H1776V127.8H1779V126H1782V128.1H1785V127.7H1788V128.3H1791V129.4H1794V129H1797V129.9H1800V208H1803V129.8H1806V127.2H1809V126.8H1812V127.3H1815V129.6H1818V129.8H1821V129H1824V126.5H1827V125.6H1830V126H1833V128.4H1836V128.5H1839V125.3H1842V125H1845V130H1848V126.7H1851V125.2H1854V127.3H1857V125.5H1860V129.1H1863V127.6H1866V128.1H1869V129.6H1872V125.6H1875V126.1H1878V128.9H1881V128H1884V127.2H1887V126.8H1890V128.1H1893V129.7H1899V129.6H1902V129.9H1905V125.7H1908V125.1H1911V129.1H1914V126.2H1917V127.6H1920V127.3H1923V129.9H1926V127.2H1929V125.7H1932V126H1935V129.5H1938V129.1H1941V125.7H1944V129.8H1947V126.9H1950V128.6H1953V127.8H1956V129.3H1959V127.4H1962V125.1H1965V127.8H1968V129.3H1971V127.1H1974V129.1H1977V127.2H1980V126.8H1986V126.1H1989V127.5H1992V129.8H1995V128H1998V128.8H2001V125.9H2004V126.8H2007V127.9H2010V126.9H2013V125H2016V129.3H2019V125.6H2022V128.3H2025V129.9H2028V126.4H2031V126.3H2034V126.7H2037V127.7H2040V129.9H2043V125.7H2046V126.2H2049V129.5H2052V126.4H2055V128.3H2058V128.6H2061V125H2064V125.1H2067V128.8H2070V129.6H2073V128.5H2076V127.3H2079V125.5H2082V127.6H2085V125.5H2088V126.6H2091V125.2H2094V127.6H2097V127.3H2100V126.4H2103V126.1H2106V125.3H2109V125.1H2112V125.6H2115V129.9H2118V125.2H2121V128.6H2124V127.3H2127V127.9H2130V126.5H2133V129.9H2136V129H2139V127H2142V127.2H2145V129.6H2148V125.8H2151V129.4H2154V128.1H2157V127.8H2160V127.7H2163V128H2166V125.5H2169V126.2H2172V126.8H2175V126.1H2178V125.4H2181V128.6H2184V127.1H2187V128.7H2190V127H2193V129.7H2196V126.2H2199V127.6H2202V127.1H2205V129H2208V125.7H2211V127.7H2214V127.3H2217V128.1H2220V126.2H2223V127.7H2226V129.9H2229V125.5H2232V129.9H2235V129.8H2238V127.2H2241V125.4H2244V127.5H2247V129.8H2250V125H2253V128.8H2256V128.9H2259V125.6H2262V128H2265V125.7H2268V125.5H2271V127.6H2274V126.5H2277V128.3H2280V127.6H2283V126.1H2286V129.6H2289V125H2292V129H2295V126.4H2298V129.5H2301V128H2304V127.3H2307V126.1H2310V129.3H2316V129.8H2319V127.9H2322V129.6H2325V129.5H2328V128.3H2331V126.7H2334V128H2337V126.7H2340V129.1H2343V127.8H2346V129.3H2349V129.5H2352V128.8H2355V126H2358V126.7H2361V125.4H2364V126.7H2367V125.8H2370V126.5H2373V129H2376V125.6H2379V129.6H2385V128.9H2388V126.2H2391V126.5H2394V127.3H2397V128.1H2400V129.6H2403V125.1H2406V125.4H2409V129.1H2412V125.1H2415V129.5H2418V125.9H2421V129.9H2424V127.4H2427V128H2430V129.1H2436V127.1H2439V127.3H2442V128.9H2445V126.3H2448V126.5H2451V129.4H2457V129.1H2460V126.7H2466V125.5H2469V129.2H2472V125.2H2475V125.9H2478V125.1H2481V127.3H2484V130H2487V125.4H2490V126.3H2496V128.5H2499V126.8H2502V125.9H2505V128.5H2508V129.5H2511V125.8H2514V125.3H2517V127H2520V129.7H2523V125.3H2526V125.7H2527V398.8Z" fill="url(#f6)"/><path d="M11.56,0V398.8M31.56,0V398.8M51.56,0V398.8M71.56,0V398.8M91.56,0V398.8M111.56,0V398.8M131.56,0V398.8M151.56,0V398.8M171.56,0V398.8M191.56,0V398.8M211.56,0V398.8M231.56,0V398.8M251.56,0V398.8M271.56,0V398.8M291.56,0V398.8M311.56,0V398.8M331.56,0V398.8M351.56,0V398.8M371.56,0V398.8M391.56,0V398.8M411.56,0V398.8M431.56,0V398.8M451.56,0V398.8M471.56,0V398.8M491.56,0V398.8M511.56,0V398.8M531.56,0V398.8M551.56,0V398.8M571.56,0V398.8M591.56,0V398.8M611.56,0V398.8M631.56,0V398.8M651.56,0V398.8M671.56,0V398.8M691.56,0V398.8M711.56,0V398.8M731.56,0V398.8M751.56,0V398.8M771.56,0V398.8M791.56,0V398.8M811.56,0V398.8M831.56,0V398.8M851.56,0V398.8M871.56,0V398.8M891.56,0V398.8M911.56,0V398.8M931.56,0V398.8M951.56,0V398.8M971.56,0V398.8M991.56,0V398.8M1011.56,0V398.8M1031.56,0V398.8M1051.56,0V398.8M1071.56,0V398.8M1091.56,0V398.8M1111.56,0V398.8M1131.56,0V398.8M1151.56,0V398.8M1171.56,0V398.8M1191.56,0V398.8M1211.56,0V398.8M1231.56,0V398.8M1251.56,0V398.8M1271.56,0V398.8M1291.56,0V398.8M1311.56,0V398.8M1331.56,0V398.8M1351.56,0V398.8M1371.56,0V398.8M1391.56,0V398.8M1411.56,0V398.8M1431.56,0V398.8M1451.56,0V398.8M1471.56,0V398.8M1491.56,0V398.8M1511.56,0V398.8M1531.56,0V398.8M1551.56,0V398.8M1571.56,0V398.8M1591.56,0V398.8M1611.56,0V398.8M1631.56,0V398.8M1651.56,0V398.8M1671.56,0V398.8M1691.56,0V398.8M1711.56,0V398.8M1731.56,0V398.8M1751.56,0V398.8M1771.56,0V398.8M1791.56,0V398.8M1811.56,0V398.8M1831.56,0V398.8M1851.56,0V398.8M1871.56,0V398.8M1891.56,0V398.8M1912.50,0V398.8M1932.50,0V398.8M1952.50,0V398.8M1972.50,0V398.8M1992.50,0V398.8M2012.50,0V398.8M2032.50,0V398.8M2052.50,0V398.8M2072.50,0V398.8M2092.50,0V398.8M2112.50,0V398.8M2132.50,0V398.8M2152.50,0V398.8M2172.50,0V398.8M2192.50,0V398.8M2212.50,0V398.8M2232.50,0V398.8M2252.50,0V398.8M2272.50,0V398.8M2292.50,0V398.8M2312.50,0V398.8M2332.50,0V398.8M2352.50,0V398.8M2372.50,0V398.8M2392.50,0V398.8M2412.50,0V398.8M2432.50,0V398.8M2452.50,0V398.8M2472.50,0V398.8M2492.50,0V398.8M2512.50,0V398.8" stroke="#24364a" stroke-width="1.2" fill="none"/><path d="M0,17.5H2527M0,37.5H2527M0,57.5H2527M0,77.5H2527M0,97.5H2527M0,117.5H2527M0,137.5H2527M0,157.5H2527M0,177.5H2527M0,197.5H2527M0,217.5H2527M0,237.5H2527M0,257.5H2527M0,277.5H2527M0,297.5H2527M0,317.5H2527M0,337.5H2527M0,357.5H2527M0,377.5H2527M0,397.5H2527" stroke="#24364a" stroke-width="1.2" fill="none"/><rect x="0" y="0" width="2527" height="1" fill="#a0a0a0"/></svg><div class="ov" style="transform:scaleX(0.7375)">Gaming - Black Myth - Standard, raised</div><div class="tip"><span>104.122 W</span><span>22:45:08</span></div><div class="sw0" style="left:2703px"><div class="stb"></div><div class="ic" style="left:13px;top:11px"><svg width="32" height="32"><use href="#hwi"/></svg></div><div class="stt" style="transform:scaleX(0.9537)">HWiNFO® 32 v8.16-5600 Sensor Status [163 values hidden]</div><svg class="wc" width="240" height="30" viewBox="0 0 240 30"><path d="M6 14.5H25M98 5h16.5a1.5 1.5 0 0 1 1.5 1.5v16a1.5 1.5 0 0 1-1.5 1.5h-16.5a1.5 1.5 0 0 1-1.5-1.5v-16a1.5 1.5 0 0 1 1.5-1.5zM190 5L209.500 24.5M209.500 5L190 24.5" stroke="#1a1a1a" stroke-width="1.7" fill="none"/></svg><div class="hdr"><span class="t" style="left:8px;transform:scaleX(0.851)">Sensor</span><span class="v c1" style="transform:scaleX(0.901)">Current</span><span class="v c2" style="transform:scaleX(0.901)">Minimum</span><span class="v c3" style="transform:scaleX(0.901)">Maximum</span><span class="v c4" style="transform:scaleX(0.901)">Average</span><i class="cs" style="left:432.6px"></i><i class="cs" style="left:592.6px"></i><i class="cs" style="left:752.6px"></i><i class="cs" style="left:912.6px"></i><i class="cs" style="left:1072.6px"></i></div><div class="r" style="top:91px"><div class="bg" style="left:105px"></div><i class="ul" style="left:73px"></i><div class="hl"></div><svg class="chv" style="left:46px;top:2px" width="16" height="28" viewBox="0 0 16 28"><path d="M1.5 2L13.500 14L1.5 26" stroke="#1a1020" stroke-width="1.7" fill="none"/></svg><svg class="chv" style="left:80px;top:0px" width="20" height="33"><use href="#blt"/></svg><span class="t" style="left:107px">Core VIDs</span><span class="v c1" style="transform:scaleX(0.879)">1.005 V</span><span class="v c2" style="transform:scaleX(0.879)">0.895 V</span><span class="v c3" style="transform:scaleX(0.879)">1.090 V</span><span class="v c4" style="transform:scaleX(0.879)">1.017 V</span></div><div class="r" style="top:124px"><i class="ul" style="left:73px"></i><div class="hl"></div><svg class="chv" style="left:46px;top:2px" width="16" height="28" viewBox="0 0 16 28"><path d="M1.5 2L13.500 14L1.5 26" stroke="#1a1020" stroke-width="1.7" fill="none"/></svg><svg class="chv" style="left:75.5px;top:3.300px" width="26" height="26"><use href="#clk"/></svg><span class="t" style="left:107px">Core Clocks</span><span class="v c1">3,188.4 MHz</span><span class="v c2">1,334.3 MHz</span><span class="v c3">4,511.9 MHz</span><span class="v c4">2,976.6 MHz</span></div><div class="r" style="top:157px"><div class="bg" style="left:73px"></div><i class="ul" style="left:41px"></i><svg class="chv" style="left:43.5px;top:3.300px" width="26" height="26"><use href="#clk"/></svg><span class="t" style="left:74.5px">Bus Clock</span><span class="v c1">99.8 MHz</span><span class="v c2">99.8 MHz</span><span class="v c3">99.8 MHz</span><span class="v c4">99.8 MHz</span></div><div class="r" style="top:190px"><i class="ul" style="left:73px"></i><div class="hl"></div><svg class="chv" style="left:46px;top:2px" width="16" height="28" viewBox="0 0 16 28"><path d="M1.5 2L13.500 14L1.5 26" stroke="#1a1020" stroke-width="1.7" fill="none"/></svg><svg class="chv" style="left:75.5px;top:3.300px" width="26" height="26"><use href="#clk"/></svg><span class="t" style="left:107px">Core Effective Clocks</span><span class="v c1">599.5 MHz</span><span class="v c2">102.2 MHz</span><span class="v c3">2,706.0 MHz</span><span class="v c4">590.5 MHz</span></div><div class="r" style="top:223px"><div class="bg" style="left:73px"></div><i class="ul" style="left:41px"></i><div class="hl"></div><svg class="chv" style="left:43.5px;top:3.300px" width="26" height="26"><use href="#clk"/></svg><span class="t" style="left:74.5px">Average Effective Clock</span><span class="v c1">599.5 MHz</span><span class="v c2">520.5 MHz</span><span class="v c3">769.1 MHz</span><span class="v c4">590.6 MHz</span></div><div class="r" style="top:256px"><i class="ul" style="left:73px"></i><div class="hl"></div><svg class="chv" style="left:46px;top:2px" width="16" height="28" viewBox="0 0 16 28"><path d="M1.5 2L13.500 14L1.5 26" stroke="#1a1020" stroke-width="1.7" fill="none"/></svg><svg class="chv" style="left:75.5px;top:3.300px" width="26" height="26"><use href="#clk"/></svg><span class="t" style="left:107px">Core Usage</span><span class="v c1" style="transform:scaleX(0.913)">15.4 %</span><span class="v c2" style="transform:scaleX(0.913)">2.4 %</span><span class="v c3" style="transform:scaleX(0.913)">62.0 %</span><span class="v c4" style="transform:scaleX(0.913)">15.4 %</span></div><div class="r" style="top:289px"><div class="bg" style="left:73px"></div><i class="ul" style="left:41px"></i><div class="hl"></div><svg class="chv" style="left:43.5px;top:3.300px" width="26" height="26"><use href="#clk"/></svg><span class="t" style="left:74.5px">Max CPU/Thread Usage</span><span class="v c1" style="transform:scaleX(0.913)">53.5 %</span><span class="v c2" style="transform:scaleX(0.913)">32.5 %</span><span class="v c3" style="transform:scaleX(0.913)">62.0 %</span><span class="v c4" style="transform:scaleX(0.913)">48.4 %</span></div><div class="r" style="top:322px"><i class="ul" style="left:41px"></i><div class="hl"></div><svg class="chv" style="left:43.5px;top:3.300px" width="26" height="26"><use href="#clk"/></svg><span class="t" style="left:74.5px">Total CPU Usage</span><span class="v c1" style="transform:scaleX(0.913)">15.4 %</span><span class="v c2" style="transform:scaleX(0.913)">12.8 %</span><span class="v c3" style="transform:scaleX(0.913)">25.9 %</span><span class="v c4" style="transform:scaleX(0.913)">15.4 %</span></div><div class="r" style="top:355px"><div class="bg" style="left:73px"></div><i class="ul" style="left:41px"></i></div><div class="r" style="top:388px"><div class="bg hd" style="left:73px"></div><i class="ul" style="left:41px"></i><svg class="chv" style="left:9px;top:3.700px" width="26" height="24" viewBox="0 0 26 24"><path d="M1.5 6L13 18L24.500 6" stroke="#1a1020" stroke-width="1.7" fill="none"/></svg><svg class="chv" style="left:45px;top:2px" width="24" height="30"><use href="#chip"/></svg><span class="t b" style="left:74.5px;transform:scaleX(0.9621)">CPU [#0]: AMD Ryzen AI 9 HX 370: Enhanced</span></div><div class="r" style="top:421px"><div class="bg" style="left:73px"></div><i class="ul" style="left:41px"></i><div class="hl"></div><svg class="chv" style="left:51px;top:1px" width="14" height="31"><use href="#thm"/></svg><span class="t" style="left:74.5px">CPU (Tctl/Tdie)</span><span class="v c1">77.1 °C</span><span class="v c2">74.9 °C</span><span class="v c3">81.3 °C</span><span class="v c4">78.3 °C</span></div><div class="r" style="top:454px"><i class="ul" style="left:41px"></i><div class="hl"></div><svg class="chv" style="left:51px;top:1px" width="14" height="31"><use href="#thm"/></svg><span class="t" style="left:74.5px">CPU Core</span><span class="v c1">76.8 °C</span><span class="v c2">74.2 °C</span><span class="v c3">80.7 °C</span><span class="v c4">77.9 °C</span></div><div class="r" style="top:487px"><div class="bg" style="left:73px"></div><i class="ul" style="left:41px"></i><div class="hl"></div><svg class="chv" style="left:51px;top:1px" width="14" height="31"><use href="#thm"/></svg><span class="t" style="left:74.5px">CPU SOC</span><span class="v c1">74.1 °C</span><span class="v c2">72.6 °C</span><span class="v c3">77.3 °C</span><span class="v c4">75.4 °C</span></div><div class="r" style="top:520px"><i class="ul" style="left:41px"></i><div class="hl"></div><svg class="chv" style="left:51px;top:1px" width="14" height="31"><use href="#thm"/></svg><span class="t" style="left:74.5px">APU GFX</span><span class="v c1">69.2 °C</span><span class="v c2">68.0 °C</span><span class="v c3">72.3 °C</span><span class="v c4">70.6 °C</span></div><div class="r" style="top:553px"><div class="bg" style="left:105px"></div><i class="ul" style="left:73px"></i><div class="hl"></div><svg class="chv" style="left:46px;top:2px" width="16" height="28" viewBox="0 0 16 28"><path d="M1.5 2L13.500 14L1.5 26" stroke="#1a1020" stroke-width="1.7" fill="none"/></svg><svg class="chv" style="left:83px;top:1px" width="14" height="31"><use href="#thm"/></svg><span class="t" style="left:107px">Core Temperatures</span><span class="v c1">70.8 °C</span><span class="v c2">67.4 °C</span><span class="v c3">80.7 °C</span><span class="v c4">72.3 °C</span></div><div class="r" style="top:586px"><i class="ul" style="left:73px"></i><div class="hl"></div><svg class="chv" style="left:46px;top:2px" width="16" height="28" viewBox="0 0 16 28"><path d="M1.5 2L13.500 14L1.5 26" stroke="#1a1020" stroke-width="1.7" fill="none"/></svg><svg class="chv" style="left:83px;top:1px" width="14" height="31"><use href="#thm"/></svg><span class="t" style="left:107px">L3 Temperatures</span><span class="v c1">70.3 °C</span><span class="v c2">69.0 °C</span><span class="v c3">73.8 °C</span><span class="v c4">71.8 °C</span></div><div class="r" style="top:619px"><div class="bg" style="left:73px"></div><i class="ul" style="left:41px"></i><div class="hl"></div><svg class="chv" style="left:48px;top:0px" width="20" height="33"><use href="#blt"/></svg><span class="t" style="left:74.5px">CPU Core Current (SVI3 TFN)</span><span class="v c1" style="transform:scaleX(0.879)">12.347 A</span><span class="v c2" style="transform:scaleX(0.879)">10.595 A</span><span class="v c3" style="transform:scaleX(0.879)">15.172 A</span><span class="v c4" style="transform:scaleX(0.879)">12.463 A</span></div><div class="r" style="top:652px"><i class="ul" style="left:41px"></i><div class="hl"></div><svg class="chv" style="left:48px;top:0px" width="20" height="33"><use href="#blt"/></svg><span class="t" style="left:74.5px">SoC Current (SVI3 TFN)</span><span class="v c1" style="transform:scaleX(0.879)">2.300 A</span><span class="v c2" style="transform:scaleX(0.879)">2.204 A</span><span class="v c3" style="transform:scaleX(0.879)">2.394 A</span><span class="v c4" style="transform:scaleX(0.879)">2.316 A</span></div><div class="r" style="top:685px"><div class="bg" style="left:73px"></div><i class="ul" style="left:41px"></i><div class="hl"></div><svg class="chv" style="left:48px;top:0px" width="20" height="33"><use href="#blt"/></svg><span class="t" style="left:74.5px">CPU TDC</span><span class="v c1" style="transform:scaleX(0.879)">12.304 A</span><span class="v c2" style="transform:scaleX(0.879)">10.457 A</span><span class="v c3" style="transform:scaleX(0.879)">15.103 A</span><span class="v c4" style="transform:scaleX(0.879)">12.464 A</span></div><div class="r" style="top:718px"><i class="ul" style="left:41px"></i><div class="hl"></div><svg class="chv" style="left:48px;top:0px" width="20" height="33"><use href="#blt"/></svg><span class="t" style="left:74.5px">CPU EDC</span><span class="v c1" style="transform:scaleX(0.879)">99.500 A</span><span class="v c2" style="transform:scaleX(0.879)">50.250 A</span><span class="v c3" style="transform:scaleX(0.879)">101.250 A</span><span class="v c4" style="transform:scaleX(0.879)">85.168 A</span></div><div class="r" style="top:751px"><div class="bg" style="left:73px"></div><i class="ul" style="left:41px"></i><div class="hl"></div><svg class="chv" style="left:48px;top:0px" width="20" height="33"><use href="#blt"/></svg><span class="t" style="left:74.5px">CPU Package Power</span><span class="v c1">18.841 W</span><span class="v c2">16.862 W</span><span class="v c3">22.142 W</span><span class="v c4">18.954 W</span></div><div class="r" style="top:784px"><i class="ul" style="left:73px"></i><div class="hl"></div><svg class="chv" style="left:46px;top:2px" width="16" height="28" viewBox="0 0 16 28"><path d="M1.5 2L13.500 14L1.5 26" stroke="#1a1020" stroke-width="1.7" fill="none"/></svg><svg class="chv" style="left:80px;top:0px" width="20" height="33"><use href="#blt"/></svg><span class="t" style="left:107px">Core Powers</span><span class="v c1">0.847 W</span><span class="v c2">0.194 W</span><span class="v c3">2.623 W</span><span class="v c4">0.844 W</span></div><div class="r" style="top:817px"><div class="bg" style="left:73px"></div><i class="ul" style="left:41px"></i><div class="hl"></div><svg class="chv" style="left:48px;top:0px" width="20" height="33"><use href="#blt"/></svg><span class="t" style="left:74.5px">CPU Core Power (SVI3 TFN)</span><span class="v c1">19.360 W</span><span class="v c2">15.712 W</span><span class="v c3">25.045 W</span><span class="v c4">19.812 W</span></div><div class="r" style="top:850px"><i class="ul" style="left:41px"></i><div class="hl"></div><svg class="chv" style="left:48px;top:0px" width="20" height="33"><use href="#blt"/></svg><span class="t" style="left:74.5px">CPU SoC Power (SVI3 TFN)</span><span class="v c1">2.139 W</span><span class="v c2">2.050 W</span><span class="v c3">2.226 W</span><span class="v c4">2.154 W</span></div><div class="r" style="top:883px"><div class="bg" style="left:73px"></div><i class="ul" style="left:41px"></i><svg class="chv" style="left:48px;top:0px" width="20" height="33"><use href="#blt"/></svg><span class="t" style="left:74.5px">APU STAPM</span><span class="v c1">18.639 W</span><span class="v c2">17.321 W</span><span class="v c3">18.651 W</span><span class="v c4">18.222 W</span></div><div class="r" style="top:916px"><i class="ul" style="left:41px"></i><svg class="chv" style="left:48px;top:0px" width="20" height="33"><use href="#blt"/></svg><span class="t" style="left:74.5px">NPU Power</span><span class="v c1">0.000 W</span><span class="v c2">0.000 W</span><span class="v c3">0.000 W</span><span class="v c4">0.000 W</span></div><div class="r" style="top:949px"><div class="bg" style="left:73px"></div><i class="ul" style="left:41px"></i><div class="hl"></div><svg class="chv" style="left:43.5px;top:3.300px" width="26" height="26"><use href="#clk"/></svg><span class="t" style="left:74.5px">Infinity Fabric Clock (FCLK)</span><span class="v c1">1,956.5 MHz</span><span class="v c2">1,955.8 MHz</span><span class="v c3">1,956.5 MHz</span><span class="v c4">1,956.4 MHz</span></div><div class="r" style="top:982px"><i class="ul" style="left:41px"></i><svg class="chv" style="left:43.5px;top:3.300px" width="26" height="26"><use href="#clk"/></svg><span class="t" style="left:74.5px">Memory Controller Clock (UCLK)</span><span class="v c1">935.8 MHz</span><span class="v c2">935.8 MHz</span><span class="v c3">935.8 MHz</span><span class="v c4">935.8 MHz</span></div><div class="r" style="top:1015px"><div class="bg" style="left:105px"></div><i class="ul" style="left:73px"></i><div class="hl"></div><svg class="chv" style="left:46px;top:2px" width="16" height="28" viewBox="0 0 16 28"><path d="M1.5 2L13.500 14L1.5 26" stroke="#1a1020" stroke-width="1.7" fill="none"/></svg><svg class="chv" style="left:75.5px;top:3.300px" width="26" height="26"><use href="#clk"/></svg><span class="t" style="left:107px">L3 Clocks</span><span class="v c1">3,547.3 MHz</span><span class="v c2">2,600.0 MHz</span><span class="v c3">4,493.1 MHz</span><span class="v c4">3,509.6 MHz</span></div><div class="r" style="top:1048px"><i class="ul" style="left:41px"></i><svg class="chv" style="left:43.5px;top:3.300px" width="26" height="26"><use href="#clk"/></svg><span class="t" style="left:74.5px">Frequency Limit - Global</span><span class="v c1">4,520.0 MHz</span><span class="v c2">4,520.0 MHz</span><span class="v c3">5,117.7 MHz</span><span class="v c4">4,525.5 MHz</span></div><div class="r" style="top:1081px"><div class="bg" style="left:73px"></div><i class="ul" style="left:41px"></i><svg class="chv" style="left:43.5px;top:3.300px" width="26" height="26"><use href="#clk"/></svg><span class="t" style="left:74.5px">NPU Clock</span><span class="v c1">0.2 MHz</span><span class="v c2">0.2 MHz</span><span class="v c3">0.2 MHz</span><span class="v c4">0.2 MHz</span></div><div class="r" style="top:1114px"><i class="ul" style="left:41px"></i><div class="hl"></div><svg class="chv" style="left:43.5px;top:3.300px" width="26" height="26"><use href="#clk"/></svg><span class="t" style="left:74.5px">CPU TDC Limit</span><span class="v c1" style="transform:scaleX(0.913)">12.3 %</span><span class="v c2" style="transform:scaleX(0.913)">10.5 %</span><span class="v c3" style="transform:scaleX(0.913)">15.1 %</span><span class="v c4" style="transform:scaleX(0.913)">12.5 %</span></div><div class="r" style="top:1147px"><div class="bg" style="left:73px"></div><i class="ul" style="left:41px"></i><div class="hl"></div><svg class="chv" style="left:43.5px;top:3.300px" width="26" height="26"><use href="#clk"/></svg><span class="t" style="left:74.5px">CPU EDC Limit</span><span class="v c1" style="transform:scaleX(0.913)">71.1 %</span><span class="v c2" style="transform:scaleX(0.913)">35.9 %</span><span class="v c3" style="transform:scaleX(0.913)">72.3 %</span><span class="v c4" style="transform:scaleX(0.913)">60.8 %</span></div><div class="r" style="top:1180px"><i class="ul" style="left:41px"></i><div class="hl"></div><svg class="chv" style="left:43.5px;top:3.300px" width="26" height="26"><use href="#clk"/></svg><span class="t" style="left:74.5px">Thermal Limit</span><span class="v c1" style="transform:scaleX(0.913)">80.8 %</span><span class="v c2" style="transform:scaleX(0.913)">78.1 %</span><span class="v c3" style="transform:scaleX(0.913)">85.0 %</span><span class="v c4" style="transform:scaleX(0.913)">82.0 %</span></div><div class="r" style="top:1213px"><div class="bg" style="left:73px"></div><i class="ul" style="left:41px"></i><svg class="chv" style="left:43.5px;top:3.300px" width="26" height="26"><use href="#clk"/></svg><span class="t" style="left:74.5px">Energy Performance Preference</span><span class="v c1" style="transform:scaleX(0.913)">20 %</span><span class="v c2" style="transform:scaleX(0.913)">10 %</span><span class="v c3" style="transform:scaleX(0.913)">20 %</span><span class="v c4" style="transform:scaleX(0.913)">20 %</span></div><div class="r" style="top:1246px"><i class="ul" style="left:41px"></i><svg class="chv" style="left:43.5px;top:3.300px" width="26" height="26"><use href="#clk"/></svg><span class="t" style="left:74.5px">NPU Usage</span><span class="v c1" style="transform:scaleX(0.913)">0.0 %</span><span class="v c2" style="transform:scaleX(0.913)">0.0 %</span><span class="v c3" style="transform:scaleX(0.913)">0.0 %</span><span class="v c4" style="transform:scaleX(0.913)">0.0 %</span></div><div class="r" style="top:1279px"><div class="bg" style="left:73px"></div><i class="ul" style="left:41px"></i><svg class="chv" style="left:43.5px;top:3.300px" width="26" height="26"><use href="#clk"/></svg><span class="t" style="left:74.5px">Thermal Throttling (HTC)</span><span class="v c1">No</span><span class="v c2">No</span><span class="v c3">No</span><span class="v c4" style="transform:scaleX(0.913)">0 %</span></div><div class="r" style="top:1312px"><i class="ul" style="left:41px"></i><svg class="chv" style="left:43.5px;top:3.300px" width="26" height="26"><use href="#clk"/></svg><span class="t" style="left:74.5px">Thermal Throttling (PROCHOT CPU)</span><span class="v c1">No</span><span class="v c2">No</span><span class="v c3">No</span><span class="v c4" style="transform:scaleX(0.913)">0 %</span></div><div class="r" style="top:1345px"><div class="bg" style="left:73px"></div><i class="ul" style="left:41px"></i><svg class="chv" style="left:43.5px;top:3.300px" width="26" height="26"><use href="#clk"/></svg><span class="t" style="left:74.5px">Thermal Throttling (PROCHOT EXT)</span><span class="v c1">No</span><span class="v c2">No</span><span class="v c3">No</span><span class="v c4" style="transform:scaleX(0.913)">0 %</span></div><div class="r" style="top:1378px"><i class="ul" style="left:41px"></i></div><div class="r" style="top:1411px"><div class="bg hd" style="left:73px"></div><i class="ul" style="left:41px"></i><svg class="chv" style="left:14px;top:2px" width="16" height="28" viewBox="0 0 16 28"><path d="M1.5 2L13.500 14L1.5 26" stroke="#1a1020" stroke-width="1.7" fill="none"/></svg><svg class="chv" style="left:45px;top:2px" width="24" height="30"><use href="#chip"/></svg><span class="t b" style="left:74.5px;transform:scaleX(0.9953)">GPU [#1]: AMD Radeon 880M/890M</span></div><div class="r" style="top:1444px"><div class="bg" style="left:73px"></div><i class="ul" style="left:41px"></i></div><div class="r" style="top:1477px"><div class="bg hd" style="left:73px"></div><i class="ul" style="left:41px"></i><svg class="chv" style="left:9px;top:3.700px" width="26" height="24" viewBox="0 0 26 24"><path d="M1.5 6L13 18L24.500 6" stroke="#1a1020" stroke-width="1.7" fill="none"/></svg><svg class="chv" style="left:45px;top:2px" width="24" height="30"><use href="#chip"/></svg><span class="t b" style="left:74.5px;transform:scaleX(0.9723)">GPU [#0]: NVIDIA&nbsp; GeForce RTX 5090 Max-Q Mobile</span></div><div class="r" style="top:1510px"><div class="bg" style="left:73px"></div><i class="ul" style="left:41px"></i><div class="hl"></div><svg class="chv" style="left:51px;top:1px" width="14" height="31"><use href="#thm"/></svg><span class="t" style="left:74.5px">GPU Temperature</span><span class="v c1">74.2 °C</span><span class="v c2">72.4 °C</span><span class="v c3">77.3 °C</span><span class="v c4">75.7 °C</span></div><div class="r" style="top:1543px"><i class="ul" style="left:41px"></i><div class="hl"></div><svg class="chv" style="left:51px;top:1px" width="14" height="31"><use href="#thm"/></svg><span class="t" style="left:74.5px">GPU Memory Junction Temperature</span><span class="v c1">74.0 °C</span><span class="v c2">72.0 °C</span><span class="v c3">76.0 °C</span><span class="v c4">74.9 °C</span></div><div class="r" style="top:1576px"><div class="bg" style="left:73px"></div><i class="ul" style="left:41px"></i><svg class="chv" style="left:51px;top:1px" width="14" height="31"><use href="#thm"/></svg><span class="t" style="left:74.5px">GPU Hot Spot Temperature</span><span class="v c1">255.0 °C</span><span class="v c2">255.0 °C</span><span class="v c3">255.0 °C</span><span class="v c4">255.0 °C</span></div><div class="r" style="top:1609px"><i class="ul" style="left:41px"></i><svg class="chv" style="left:51px;top:1px" width="14" height="31"><use href="#thm"/></svg><span class="t" style="left:74.5px">GPU Thermal Limit</span><span class="v c1">87.0 °C</span><span class="v c2">87.0 °C</span><span class="v c3">87.0 °C</span><span class="v c4">87.0 °C</span></div><div class="r" style="top:1642px"><div class="bg" style="left:73px"></div><i class="ul" style="left:41px"></i><div class="hl"></div><svg class="chv" style="left:48px;top:0px" width="20" height="33"><use href="#blt"/></svg><span class="t" style="left:74.5px">GPU Core Voltage</span><span class="v c1" style="transform:scaleX(0.879)">0.690 V</span><span class="v c2" style="transform:scaleX(0.879)">0.675 V</span><span class="v c3" style="transform:scaleX(0.879)">0.695 V</span><span class="v c4" style="transform:scaleX(0.879)">0.691 V</span></div><div class="r" style="top:1675px"><i class="ul" style="left:73px"></i><svg class="chv" style="left:46px;top:2px" width="16" height="28" viewBox="0 0 16 28"><path d="M1.5 2L13.500 14L1.5 26" stroke="#1a1020" stroke-width="1.7" fill="none"/></svg><svg class="chv" style="left:80px;top:0px" width="20" height="33"><use href="#blt"/></svg><span class="t" style="left:107px">GPU Rail Voltages</span><span class="v c2" style="transform:scaleX(0.879)">0.640 V</span><span class="v c3" style="transform:scaleX(0.879)">19.981 V</span></div><div class="r" style="top:1708px"><div class="bg" style="left:73px"></div><i class="ul" style="left:41px"></i><div class="hl"></div><svg class="chv" style="left:48px;top:0px" width="20" height="33"><use href="#blt"/></svg><span class="t" style="left:74.5px">GPU Power (Total)</span><span class="v c1">100.869 W</span><span class="v c2">71.814 W</span><span class="v c3">107.556 W</span><span class="v c4">102.896 W</span></div><div class="r" style="top:1741px"><i class="ul" style="left:73px"></i><svg class="chv" style="left:46px;top:2px" width="16" height="28" viewBox="0 0 16 28"><path d="M1.5 2L13.500 14L1.5 26" stroke="#1a1020" stroke-width="1.7" fill="none"/></svg><svg class="chv" style="left:80px;top:0px" width="20" height="33"><use href="#blt"/></svg><span class="t" style="left:107px">GPU Rail Powers</span><span class="v c2">0.000 W</span><span class="v c3">100.744 W</span></div><div class="r" style="top:1774px"><div class="bg" style="left:73px"></div><i class="ul" style="left:41px"></i><div class="hl"></div><svg class="chv" style="left:43.5px;top:3.300px" width="26" height="26"><use href="#clk"/></svg><span class="t" style="left:74.5px">GPU Clock</span><span class="v c1">1,567.0 MHz</span><span class="v c2">1,485.0 MHz</span><span class="v c3">1,665.0 MHz</span><span class="v c4">1,604.3 MHz</span></div><div class="r" style="top:1807px"><i class="ul" style="left:41px"></i><div class="hl"></div><svg class="chv" style="left:43.5px;top:3.300px" width="26" height="26"><use href="#clk"/></svg><span class="t" style="left:74.5px">GPU Memory Clock</span><span class="v c1">1,803.3 MHz</span><span class="v c2">1,500.2 MHz</span><span class="v c3">2,333.5 MHz</span><span class="v c4">1,627.7 MHz</span></div><div class="r" style="top:1840px"><div class="bg" style="left:73px"></div><i class="ul" style="left:41px"></i><div class="hl"></div><svg class="chv" style="left:43.5px;top:3.300px" width="26" height="26"><use href="#clk"/></svg><span class="t" style="left:74.5px">GPU Video Clock</span><span class="v c1">1,387.0 MHz</span><span class="v c2">1,372.0 MHz</span><span class="v c3">1,462.0 MHz</span><span class="v c4">1,411.6 MHz</span></div><div class="r" style="top:1873px"><i class="ul" style="left:41px"></i><div class="hl"></div><svg class="chv" style="left:43.5px;top:3.300px" width="26" height="26"><use href="#clk"/></svg><span class="t" style="left:74.5px">GPU Effective Clock</span><span class="v c1">1,565.2 MHz</span><span class="v c2">1,401.1 MHz</span><span class="v c3">1,615.2 MHz</span><span class="v c4">1,585.6 MHz</span></div><div class="r" style="top:1906px"><div class="bg" style="left:73px"></div><i class="ul" style="left:41px"></i><div class="hl"></div><svg class="chv" style="left:43.5px;top:3.300px" width="26" height="26"><use href="#clk"/></svg><span class="t" style="left:74.5px">GPU Crossbar Clock</span><span class="v c1">1,447.0 MHz</span><span class="v c2">1,432.0 MHz</span><span class="v c3">1,522.0 MHz</span><span class="v c4">1,469.1 MHz</span></div><div class="r" style="top:1939px"><i class="ul" style="left:41px"></i><div class="hl"></div><svg class="chv" style="left:43.5px;top:3.300px" width="26" height="26"><use href="#clk"/></svg><span class="t" style="left:74.5px">GPU Core Load</span><span class="v c1" style="transform:scaleX(0.913)">99.0 %</span><span class="v c2" style="transform:scaleX(0.913)">75.0 %</span><span class="v c3" style="transform:scaleX(0.913)">99.0 %</span><span class="v c4" style="transform:scaleX(0.913)">98.8 %</span></div><div class="r" style="top:1972px"><div class="bg" style="left:73px"></div><i class="ul" style="left:41px"></i><div class="hl"></div><svg class="chv" style="left:43.5px;top:3.300px" width="26" height="26"><use href="#clk"/></svg><span class="t" style="left:74.5px">GPU Memory Controller Load</span><span class="v c1" style="transform:scaleX(0.913)">25.0 %</span><span class="v c2" style="transform:scaleX(0.913)">12.0 %</span><span class="v c3" style="transform:scaleX(0.913)">30.0 %</span><span class="v c4" style="transform:scaleX(0.913)">27.3 %</span></div><div class="r" style="top:2005px"><i class="ul" style="left:41px"></i><svg class="chv" style="left:43.5px;top:3.300px" width="26" height="26"><use href="#clk"/></svg><span class="t" style="left:74.5px">GPU Video Engine Load</span><span class="v c1" style="transform:scaleX(0.913)">0.0 %</span><span class="v c2" style="transform:scaleX(0.913)">0.0 %</span><span class="v c3" style="transform:scaleX(0.913)">0.0 %</span><span class="v c4" style="transform:scaleX(0.913)">0.0 %</span></div><div class="r" style="top:2038px"><div class="bg" style="left:73px"></div><i class="ul" style="left:41px"></i></div><div class="r" style="top:2071px"><div class="bg hd" style="left:73px"></div><i class="ul" style="left:41px"></i><svg class="chv" style="left:9px;top:3.700px" width="26" height="24" viewBox="0 0 26 24"><path d="M1.5 6L13 18L24.500 6" stroke="#1a1020" stroke-width="1.7" fill="none"/></svg><svg class="chv" style="left:45px;top:2px" width="24" height="30"><use href="#chip"/></svg><span class="t b" style="left:73px;background:#1e7fc0;color:#fff;padding:0 3px;top:2.500px;line-height:30px;transform:scaleX(0.9610)">Battery: ASUS A32-K55</span></div><div class="sb"></div><div class="sbt"></div><div class="swb"></div></div></div></body></html>
